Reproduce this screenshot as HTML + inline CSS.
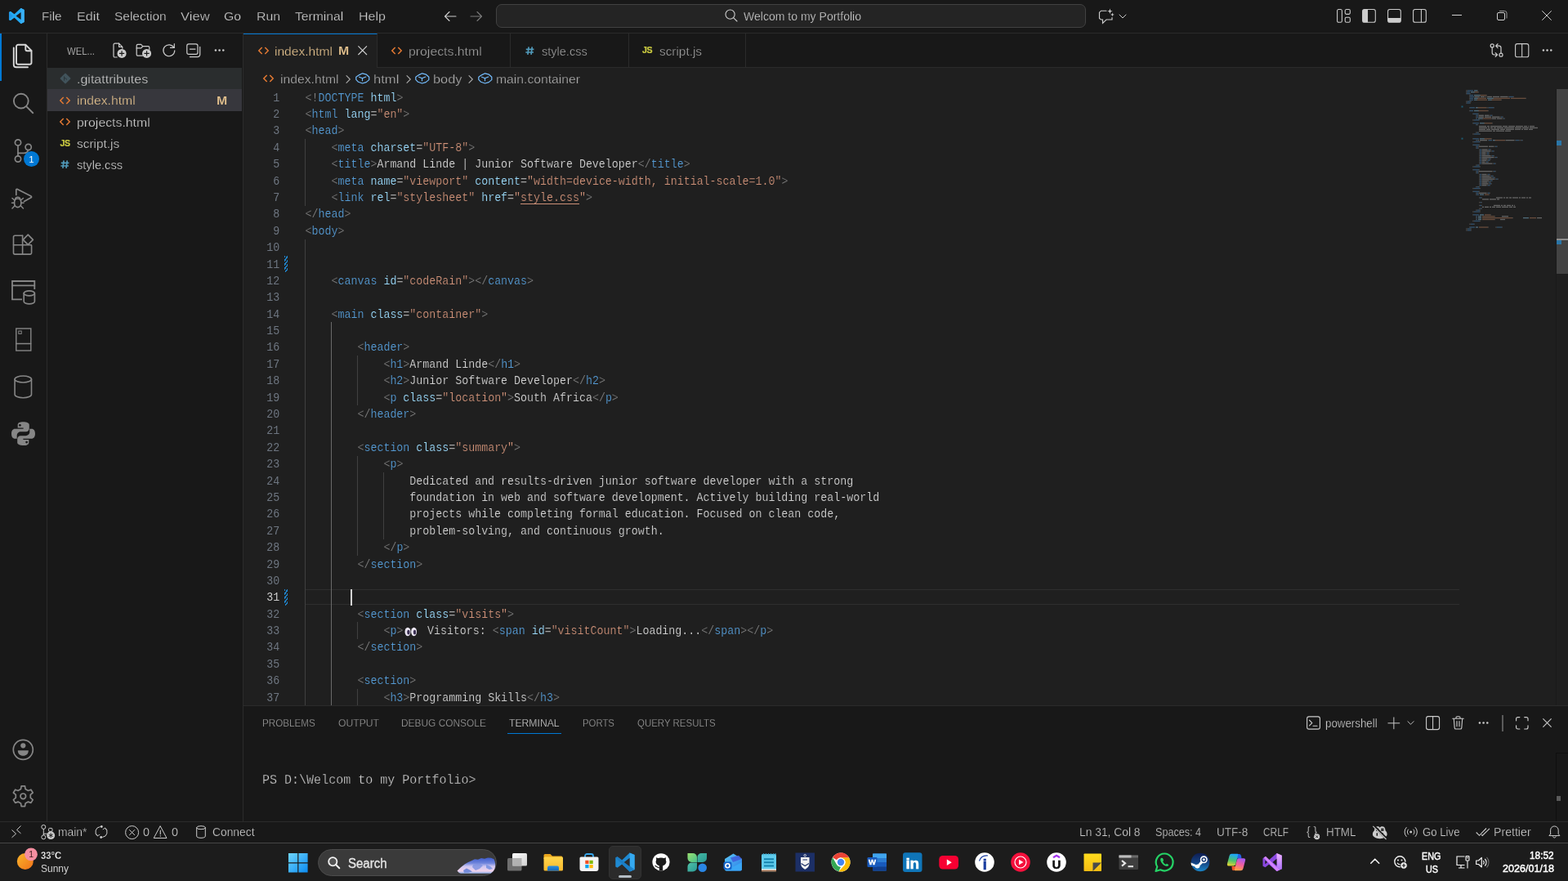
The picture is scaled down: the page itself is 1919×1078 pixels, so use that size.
<!DOCTYPE html>
<html lang="en">
<head>
<meta charset="UTF-8">
<title>index.html - Welcom to my Portfolio - Visual Studio Code</title>
<style>
*{box-sizing:border-box;margin:0;padding:0}
html,body{width:1919px;height:1078px;overflow:hidden;background:#181818}
body{font-family:"Liberation Sans","DejaVu Sans",sans-serif;color:#ccc;-webkit-font-smoothing:antialiased}
#app{position:absolute;left:0;top:0;width:1919px;height:1078px;overflow:hidden;background:#181818;will-change:transform}
.b{position:absolute;display:block}
.t{position:absolute;display:block;white-space:pre;line-height:20px;height:20px;transform-origin:0 50%;-webkit-text-stroke:0.25px #181818}
.m{font-family:"Liberation Mono","DejaVu Sans Mono",monospace}
svg{position:absolute;display:block;overflow:visible}
.x text{font-family:"Liberation Sans","DejaVu Sans",sans-serif;white-space:pre;stroke:#181818;stroke-width:.25px}
.x.m text{font-family:"Liberation Mono","DejaVu Sans Mono",monospace}
.ln{position:absolute;left:0;width:45.3px;text-align:right;color:#6e7681}
.cl{position:absolute;left:76.6px;white-space:pre;color:#d2d2d2}
.cl{-webkit-text-stroke:0.16px #1f1f1f}
.ln,.cl{transform:scaleY(1.12);transform-origin:0 13.75px}
.ln,.cl{font-family:"Liberation Mono","DejaVu Sans Mono",monospace;font-size:13.333px;letter-spacing:-0.015px;height:20.4px;line-height:20.4px}
.d{color:#808080}.g{color:#569cd6}.a{color:#9cdcfe}.s{color:#ce9178}
.emo{display:inline-block;width:21.6px;letter-spacing:0;font-size:12.5px;overflow:hidden;vertical-align:top;height:20.4px;opacity:0}
.ig{position:absolute;width:1px;background:#404040}
</style>
</head>
<body>
<div id="app">
<div class="b" style="left:0px;top:0px;width:1919px;height:40px;background:#181818;"></div>
<div class="b" style="left:0px;top:40px;width:1919px;height:1px;background:#2b2b2b;"></div>
<svg style="left:10px;top:10px;" width="20.5" height="19.07" viewBox="8 7 84 86" fill="none"><path d="M74 7L38 41 17 25 8 29v42l9 4 21-16 36 34 18-9V16z" fill="#2196e6"/><path d="M74 7L38 41 17 25 8 29 30 50 8 71l9 4 21-16 36 34 18-9V16zM74 30v40L47 50z" fill="#23a9f2" fill-rule="evenodd"/><path d="M74 7l18 9v68l-18 9z" fill="#3ab0f5"/><path d="M74 30v40L47 50z" fill="#181818"/></svg>
<svg class="x" style="left:51.2px;top:10px" width="28" height="20"><text y="15.27" font-size="15.2" fill="#cccccc" textLength="24.6" lengthAdjust="spacingAndGlyphs">File</text></svg>
<svg class="x" style="left:94.2px;top:10px" width="31" height="20"><text y="15.27" font-size="15.2" fill="#cccccc" textLength="27.9" lengthAdjust="spacingAndGlyphs">Edit</text></svg>
<svg class="x" style="left:139.7px;top:10px" width="67" height="20"><text y="15.27" font-size="15.2" fill="#cccccc" textLength="63.6" lengthAdjust="spacingAndGlyphs">Selection</text></svg>
<svg class="x" style="left:221.2px;top:10px" width="39" height="20"><text y="15.27" font-size="15.2" fill="#cccccc" textLength="35.6" lengthAdjust="spacingAndGlyphs">View</text></svg>
<svg class="x" style="left:274.2px;top:10px" width="24" height="20"><text y="15.27" font-size="15.2" fill="#cccccc" textLength="21.1" lengthAdjust="spacingAndGlyphs">Go</text></svg>
<svg class="x" style="left:314.2px;top:10px" width="32" height="20"><text y="15.27" font-size="15.2" fill="#cccccc" textLength="29.1" lengthAdjust="spacingAndGlyphs">Run</text></svg>
<svg class="x" style="left:361px;top:10px" width="62" height="20"><text y="15.27" font-size="15.2" fill="#cccccc" textLength="59.3" lengthAdjust="spacingAndGlyphs">Terminal</text></svg>
<svg class="x" style="left:439.2px;top:10px" width="36" height="20"><text y="15.27" font-size="15.2" fill="#cccccc" textLength="32.9" lengthAdjust="spacingAndGlyphs">Help</text></svg>
<svg style="left:542.5px;top:12px;" width="16" height="16" viewBox="0 0 16 16" fill="none"><path d="M15 8H1.5M7 2.5L1.5 8L7 13.5" stroke="#cccccc" stroke-width="1.1" fill="none" stroke-linecap="round" stroke-linejoin="round"/></svg>
<svg style="left:574.5px;top:12px;" width="16" height="16" viewBox="0 0 16 16" fill="none"><path d="M1 8H14.5M9 2.5L14.5 8L9 13.5" stroke="#7a7a7a" stroke-width="1.1" fill="none" stroke-linecap="round" stroke-linejoin="round"/></svg>
<div class="b" style="left:607px;top:5px;width:722px;height:29px;background:#242424;border:1px solid #414141;border-radius:7px;"></div>
<svg style="left:887px;top:11px;" width="16" height="16" viewBox="0 0 16 16" fill="none"><circle cx="6.6" cy="6.6" r="5.6" stroke="#cccccc" stroke-width="1.1"/><path d="M10.8 10.8L15 15" stroke="#cccccc" stroke-width="1.1" fill="none" stroke-linecap="round" stroke-linejoin="round"/></svg>
<svg class="x" style="left:909.5px;top:9.8px" width="147" height="20"><text y="15.06" font-size="14.6" fill="#cccccc" textLength="144" lengthAdjust="spacingAndGlyphs" style="stroke:#242424;stroke-width:0.25px">Welcom to my Portfolio</text></svg>
<svg style="left:1344px;top:9.5px;" width="20" height="20" viewBox="0 0 20 20" fill="none"><path d="M10 3.2H3.6L1.5 5.2V12.4L3.4 14H5.5V18.3L10 14H17V11.6" stroke="#cccccc" stroke-width="1.15" fill="none" stroke-linecap="round" stroke-linejoin="miter"/><path d="M14.4 0.5L15.2 2.9L17.6 3.7L15.2 4.5L14.4 6.9L13.6 4.5L11.2 3.7L13.6 2.9z" fill="#cccccc"/><path d="M17.4 5.5L18 7.3L19.8 7.9L18 8.5L17.4 10.3L16.8 8.5L15 7.9L16.8 7.3z" fill="#cccccc"/></svg>
<svg style="left:1369px;top:14.5px;" width="10" height="10" viewBox="0 0 10 10" fill="none"><path d="M1 3L5 7L9 3" stroke="#cccccc" stroke-width="1" fill="none" stroke-linecap="round" stroke-linejoin="round"/></svg>
<svg style="left:1635.5px;top:11.2px;" width="16.9" height="16.9" viewBox="0 0 17.5 17.5" fill="none"><rect x="0.6" y="0.6" width="6" height="16.3" rx="1.6" stroke="#cccccc" stroke-width="1.1"/><rect x="10.6" y="0.6" width="6.3" height="6" rx="1.6" stroke="#cccccc" stroke-width="1.1"/><rect x="10.6" y="10.6" width="6.3" height="6.3" rx="1.6" stroke="#cccccc" stroke-width="1.1"/></svg>
<svg style="left:1666.5px;top:11.2px;" width="16.9" height="16.9" viewBox="0 0 17.5 17.5" fill="none"><rect x="0.6" y="0.6" width="16.3" height="16.3" rx="2.4" stroke="#cccccc" stroke-width="1.1"/><path d="M3 0.6H7.3V16.9H3A2.4 2.4 0 0 1 0.6 14.5V3A2.4 2.4 0 0 1 3 0.6z" fill="#cccccc"/></svg>
<svg style="left:1698px;top:11.2px;" width="16.9" height="16.9" viewBox="0 0 17.5 17.5" fill="none"><rect x="0.6" y="0.6" width="16.3" height="16.3" rx="2.4" stroke="#cccccc" stroke-width="1.1"/><path d="M0.6 11.5H16.9V14.5A2.4 2.4 0 0 1 14.5 16.9H3A2.4 2.4 0 0 1 0.6 14.5z" fill="#cccccc"/></svg>
<svg style="left:1728.5px;top:11.2px;" width="16.9" height="16.9" viewBox="0 0 17.5 17.5" fill="none"><rect x="0.6" y="0.6" width="16.3" height="16.3" rx="2.4" stroke="#cccccc" stroke-width="1.1"/><path d="M10.8 0.6V16.9" stroke="#cccccc" stroke-width="1.1"/></svg>
<svg style="left:1777px;top:12px;" width="12" height="12" viewBox="0 0 12 12" fill="none"><path d="M0 6.5H12" stroke="#cfcfcf" stroke-width="1"/></svg>
<svg style="left:1832px;top:13px;" width="12.5" height="12.5" viewBox="0 0 12.5 12.5" fill="none"><rect x="0.5" y="2.5" width="9" height="9" rx="1.5" stroke="#cfcfcf"/><path d="M3 0.5H9.5A2.5 2.5 0 0 1 12 3V9.5" stroke="#9a9a9a"/></svg>
<svg style="left:1887px;top:13px;" width="12" height="12" viewBox="0 0 12 12" fill="none"><path d="M0.3 0.3L11.7 11.7M11.7 0.3L0.3 11.7" stroke="#cfcfcf" stroke-width="1"/></svg>
<div class="b" style="left:0px;top:41px;width:57px;height:964px;background:#181818;"></div>
<div class="b" style="left:0px;top:41px;width:2px;height:58px;background:#0078d4;"></div>
<svg style="left:14px;top:54px;" width="30" height="30" viewBox="0 0 30 30" fill="none"><path d="M17.5 0.8H8.2A2.2 2.2 0 0 0 6 3V22.5A2.2 2.2 0 0 0 8.2 24.7H22.3A2.2 2.2 0 0 0 24.5 22.5V8L17.5 0.8z" stroke="#d7d7d7" stroke-width="1.9" fill="none" stroke-linecap="round" stroke-linejoin="round"/><path d="M17.3 1V6.2A2 2 0 0 0 19.3 8.2H24.3" stroke="#d7d7d7" stroke-width="1.9" fill="none" stroke-linecap="round" stroke-linejoin="round"/><path d="M2.8 4.5V25.2A3 3 0 0 0 5.8 28.2H20" stroke="#d7d7d7" stroke-width="1.9" fill="none" stroke-linecap="round" stroke-linejoin="round"/></svg>
<svg style="left:14px;top:112px;" width="30" height="30" viewBox="0 0 30 30" fill="none"><circle cx="11.8" cy="11.6" r="8.9" stroke="#868686" stroke-width="1.9"/><path d="M18.4 18.4L26.3 26.2" stroke="#868686" stroke-width="1.9" fill="none" stroke-linecap="round" stroke-linejoin="round"/></svg>
<svg style="left:14px;top:170px;" width="30" height="30" viewBox="0 0 30 30" fill="none"><circle cx="8" cy="4.4" r="3.6" stroke="#868686" stroke-width="1.7"/><circle cx="8" cy="24.5" r="3.6" stroke="#868686" stroke-width="1.7"/><circle cx="20.7" cy="10" r="3.6" stroke="#868686" stroke-width="1.7"/><path d="M8 8V21" stroke="#868686" stroke-width="1.7" fill="none" stroke-linecap="round" stroke-linejoin="round"/><path d="M20.3 13.6C20 16.5 18 17.3 15 17.3H8" stroke="#868686" stroke-width="1.7" fill="none" stroke-linecap="round" stroke-linejoin="round"/></svg>
<div class="b" style="left:29px;top:185px;width:19px;height:19px;background:#0078d4;border-radius:50%;"></div>
<span class="t" style="left:35.3px;top:187.6px;font-size:11.5px;color:#ffffff;line-height:14px;height:14px;-webkit-text-stroke:0px #181818;">1</span>
<svg style="left:14px;top:228px;" width="30" height="30" viewBox="0 0 30 30" fill="none"><path d="M5.8 10.5V4.2A1 1 0 0 1 7.2 3.4L24 12A1 1 0 0 1 24 13.8L15.5 18.5" stroke="#868686" stroke-width="1.7" fill="none" stroke-linecap="round" stroke-linejoin="round"/><ellipse cx="7.7" cy="20.3" rx="4.2" ry="5.3" stroke="#868686" stroke-width="1.7"/><path d="M4.6 15.6A3.2 3.2 0 0 1 10.8 15.6" stroke="#868686" stroke-width="1.6" fill="none" stroke-linecap="round" stroke-linejoin="round"/><path d="M3.5 20.3H0.5M15 20.3H12M3.8 17L1 14.5M11.6 17L14.4 14.5M3.8 24L1 27M11.6 24L14.4 27" stroke="#868686" stroke-width="1.5" fill="none" stroke-linecap="round" stroke-linejoin="round"/></svg>
<svg style="left:14px;top:286px;" width="30" height="30" viewBox="0 0 30 30" fill="none"><path d="M13.6 2.3H4.3A1.8 1.8 0 0 0 2.5 4.1V23.3A1.8 1.8 0 0 0 4.3 25.1H22.8A1.8 1.8 0 0 0 24.6 23.3V14.2" stroke="#868686" stroke-width="1.6" fill="none" stroke-linecap="round" stroke-linejoin="round"/><path d="M2.5 13.7H24.3M13.6 2.3V25.1" stroke="#868686" stroke-width="1.6" fill="none" stroke-linecap="round" stroke-linejoin="round"/><path d="M20.3 1.2L26.4 7.3L20.3 13.4L14.2 7.3z" stroke="#868686" stroke-width="1.7" fill="none" stroke-linecap="round" stroke-linejoin="round"/></svg>
<svg style="left:14px;top:343px;" width="30" height="30" viewBox="0 0 30 30" fill="none"><path d="M13 23.3H1V1H28.3V11" stroke="#868686" stroke-width="1.8" fill="none" stroke-linecap="butt" stroke-linejoin="miter"/><path d="M1 6.3H28.3" stroke="#868686" stroke-width="1.8" fill="none" stroke-linecap="round" stroke-linejoin="round"/><ellipse cx="21.8" cy="15.8" rx="6.6" ry="3" stroke="#868686" stroke-width="1.7"/><path d="M15.2 15.8V25.8C15.2 27.5 18.2 28.8 21.8 28.8S28.4 27.5 28.4 25.8V15.8" stroke="#868686" stroke-width="1.7" fill="none" stroke-linecap="round" stroke-linejoin="round"/></svg>
<svg style="left:14px;top:401px;" width="30" height="30" viewBox="0 0 30 30" fill="none"><rect x="5.8" y="1" width="18" height="27" stroke="#868686" stroke-width="1.4"/><path d="M5.8 19.5H23.8" stroke="#868686" stroke-width="1.4" fill="none" stroke-linecap="round" stroke-linejoin="round"/><rect x="8.8" y="4" width="3.4" height="3.4" stroke="#868686" stroke-width="1"/></svg>
<svg style="left:14px;top:459px;" width="30" height="30" viewBox="0 0 30 30" fill="none"><ellipse cx="14.3" cy="5" rx="10.2" ry="4" stroke="#868686" stroke-width="1.6"/><path d="M4.1 5V23.5C4.1 26 8.7 27.8 14.3 27.8S24.5 26 24.5 23.5V5" stroke="#868686" stroke-width="1.6" fill="none" stroke-linecap="round" stroke-linejoin="round"/></svg>
<svg style="left:14px;top:516px;" width="30" height="30" viewBox="0 0 30 30" fill="none"><path d="M14.2 0.3c-3.7 0-6.5 1-6.5 3.6v3.6h6.9v1.2H4.4C1.7 8.7 0 10.9 0 14.7s1.6 6 4.3 6h2.4v-3.9c0-2.7 2.3-4.6 4.9-4.6h6.3c2.2 0 3.9-1.8 3.9-4V3.9c0-2.2-2.9-3.6-7.6-3.6z" fill="#868686"/><path d="M14.8 29.1c3.7 0 6.5-1 6.5-3.6v-3.6h-6.9v-1.2h10.2c2.7 0 4.4-2.2 4.4-6s-1.6-6-4.3-6h-2.4v3.9c0 2.7-2.3 4.6-4.9 4.6h-6.3c-2.2 0-3.9 1.8-3.9 4v4.3c0 2.2 2.9 3.6 7.6 3.6z" fill="#868686"/><circle cx="10.4" cy="4.3" r="1.4" fill="#181818"/><circle cx="18.6" cy="25.1" r="1.4" fill="#181818"/></svg>
<svg style="left:14px;top:903px;" width="30" height="30" viewBox="0 0 30 30" fill="none"><circle cx="14.3" cy="14.3" r="12" stroke="#868686" stroke-width="1.7"/><circle cx="14.3" cy="9.3" r="3.1" fill="#868686"/><path d="M7.8 15.3H20.8C20.8 19.5 18.3 21.8 14.3 21.8S7.8 19.5 7.8 15.3z" fill="#868686"/></svg>
<svg style="left:14px;top:960px;" width="30" height="30" viewBox="0 0 30 30" fill="none"><path d="M12.1 1.9L16.5 1.9L17.1 5.6L20.5 7.5L23.9 6.2L26.2 10.0L23.3 12.4L23.3 16.2L26.2 18.6L23.9 22.4L20.5 21.1L17.1 23.0L16.5 26.7L12.1 26.7L11.5 23.0L8.1 21.1L4.7 22.4L2.4 18.6L5.3 16.2L5.3 12.4L2.4 10.0L4.7 6.2L8.1 7.5L11.5 5.6z" stroke="#868686" stroke-width="1.7" fill="none" stroke-linecap="round" stroke-linejoin="round"/><circle cx="14.3" cy="14.3" r="3.3" stroke="#868686" stroke-width="1.7"/></svg>
<div class="b" style="left:58px;top:41px;width:239px;height:964px;background:#181818;"></div>
<svg class="x" style="left:81.8px;top:51.8px" width="37" height="20"><text y="14.5" font-size="13" fill="#cccccc" textLength="34" lengthAdjust="spacingAndGlyphs">WEL...</text></svg>
<svg style="left:136.3px;top:51.7px;" width="19.2" height="19.2" viewBox="0 0 16 16" fill="none"><path d="M8 1H3.7A1.2 1.2 0 0 0 2.5 2.2V13.8A1.2 1.2 0 0 0 3.7 15H6" stroke="#cccccc" stroke-width="1" fill="none" stroke-linecap="round" stroke-linejoin="round"/><path d="M8 1L11.5 4.5V6M8 1V4.5H11.5" stroke="#cccccc" stroke-width="1" fill="none" stroke-linecap="round" stroke-linejoin="round"/><circle cx="10.9" cy="11.2" r="4.6" fill="#cccccc"/><path d="M10.9 8.6V13.8M8.3 11.2H13.5" stroke="#181818" stroke-width="1"/></svg>
<svg style="left:165.8px;top:51.9px;" width="19.2" height="19.2" viewBox="0 0 16 16" fill="none"><path d="M7 13.5H2.2A1.2 1.2 0 0 1 1 12.3V3.2A1.2 1.2 0 0 1 2.2 2H5.5L7.3 3.8H12.8A1.2 1.2 0 0 1 14 5V7" stroke="#cccccc" stroke-width="1" fill="none" stroke-linecap="round" stroke-linejoin="round"/><path d="M1 5.8H5.6L7.3 3.9" stroke="#cccccc" stroke-width="1" fill="none" stroke-linecap="round" stroke-linejoin="round"/><circle cx="11.3" cy="11.2" r="4.6" fill="#cccccc"/><path d="M11.3 8.6V13.8M8.7 11.2H13.9" stroke="#181818" stroke-width="1"/></svg>
<svg style="left:196.5px;top:51.3px;" width="19.2" height="19.2" viewBox="0 0 16 16" fill="none"><path d="M13.3 6.2A5.8 5.8 0 1 0 14 9" stroke="#cccccc" stroke-width="1" fill="none" stroke-linecap="round" stroke-linejoin="round"/><path d="M13.6 2.2V6.2H9.6" stroke="#cccccc" stroke-width="1" fill="none" stroke-linecap="round" stroke-linejoin="round"/></svg>
<svg style="left:227.2px;top:51.6px;" width="19.2" height="19.2" viewBox="0 0 16 16" fill="none"><rect x="1.5" y="1.5" width="11" height="10.5" rx="1.8" stroke="#cccccc" stroke-width="1"/><path d="M4.5 6.7H10" stroke="#cccccc" stroke-width="1" fill="none" stroke-linecap="round" stroke-linejoin="round"/><path d="M14.8 4.5V12.3A2.4 2.4 0 0 1 12.4 14.7H4.5" stroke="#cccccc" stroke-width="1" fill="none" stroke-linecap="round" stroke-linejoin="round"/></svg>
<svg style="left:259.4px;top:51.9px;" width="19.2" height="19.2" viewBox="0 0 16 16" fill="none"><circle cx="4.1" cy="8" r="1.05" fill="#cccccc"/><circle cx="8" cy="8" r="1.05" fill="#cccccc"/><circle cx="11.9" cy="8" r="1.05" fill="#cccccc"/></svg>
<div class="b" style="left:58px;top:83px;width:238px;height:26.4px;background:#2a2d2e;"></div>
<svg style="left:72.5px;top:89.4px;" width="14" height="14" viewBox="0 0 14 14" fill="none"><rect x="2.2" y="2.2" width="9.6" height="9.6" rx="1" transform="rotate(45 7 7)" fill="#41535b"/><path d="M5.6 4.8V9.2M5.6 6.5C7.5 6.5 8.4 7 8.4 8.2" stroke="#2a3439" stroke-width="1" fill="none" stroke-linecap="round" stroke-linejoin="round"/></svg>
<svg class="x" style="left:93.6px;top:86.7px" width="90" height="20"><text y="15.27" font-size="15.2" fill="#cccccc" textLength="87.2" lengthAdjust="spacingAndGlyphs" style="stroke:#2a2d2e;stroke-width:0.25px">.gitattributes</text></svg>
<div class="b" style="left:58px;top:109.4px;width:238px;height:26.4px;background:#37373d;"></div>
<svg style="left:73px;top:117.8px;" width="13" height="10" viewBox="0 0 13 10" fill="none"><path d="M4.7 1L0.8 5L4.7 9M8.3 1L12.2 5L8.3 9" stroke="#e37933" stroke-width="1.5" fill="none" stroke-linecap="butt" stroke-linejoin="miter"/></svg>
<svg class="x" style="left:93.6px;top:113.1px" width="75" height="20"><text y="15.27" font-size="15.2" fill="#e2c08d" textLength="71.7" lengthAdjust="spacingAndGlyphs" style="stroke:#37373d;stroke-width:0.25px">index.html</text></svg>
<svg class="x" style="left:264.6px;top:112.6px" width="16" height="20"><text y="15.06" font-size="14.6" fill="#e2c08d" textLength="13.2" lengthAdjust="spacingAndGlyphs" font-weight="700" style="stroke:#37373d;stroke-width:0.1px">M</text></svg>
<svg style="left:73px;top:144.2px;" width="13" height="10" viewBox="0 0 13 10" fill="none"><path d="M4.7 1L0.8 5L4.7 9M8.3 1L12.2 5L8.3 9" stroke="#e37933" stroke-width="1.5" fill="none" stroke-linecap="butt" stroke-linejoin="miter"/></svg>
<svg class="x" style="left:93.6px;top:139.5px" width="93" height="20"><text y="15.27" font-size="15.2" fill="#cccccc" textLength="89.7" lengthAdjust="spacingAndGlyphs">projects.html</text></svg>
<span class="t" style="left:73.6px;top:167.5px;font-size:10.6px;font-weight:700;color:#cbcb41;letter-spacing:-0.5px;line-height:14px;height:14px;-webkit-text-stroke:0.2px #cbcb41">JS</span>
<svg class="x" style="left:93.6px;top:165.9px" width="55" height="20"><text y="15.27" font-size="15.2" fill="#cccccc" textLength="52.2" lengthAdjust="spacingAndGlyphs">script.js</text></svg>
<svg style="left:73.9px;top:196.2px;" width="11.4" height="10.4" viewBox="0 0 12 11" fill="none"><path d="M4.3 0.5L3 10.5M8.7 0.5L7.4 10.5M0.8 3.6H11M0.3 7.4H10.5" stroke="#519aba" stroke-width="1.75" fill="none" stroke-linejoin="round" stroke-linecap="butt"/></svg>
<svg class="x" style="left:93.6px;top:192.3px" width="59" height="20"><text y="15.27" font-size="15.2" fill="#cccccc" textLength="56" lengthAdjust="spacingAndGlyphs">style.css</text></svg>
<div class="b" style="left:297px;top:41px;width:1622px;height:42px;background:#181818;"></div>
<div class="b" style="left:297px;top:82px;width:1622px;height:1px;background:#2b2b2b;"></div>
<div class="b" style="left:298px;top:41px;width:163.7px;height:42px;background:#1f1f1f;border-top:1px solid #0078d4;border-right:1px solid #2b2b2b;"></div>
<svg style="left:315.5px;top:57.3px;" width="13" height="10" viewBox="0 0 13 10" fill="none"><path d="M4.7 1L0.8 5L4.7 9M8.3 1L12.2 5L8.3 9" stroke="#e37933" stroke-width="1.5" fill="none" stroke-linecap="butt" stroke-linejoin="miter"/></svg>
<svg class="x" style="left:335.8px;top:52.6px" width="74" height="20"><text y="15.27" font-size="15.2" fill="#e2c08d" textLength="71" lengthAdjust="spacingAndGlyphs" style="stroke:#1f1f1f;stroke-width:0.25px">index.html</text></svg>
<svg class="x" style="left:414px;top:52.1px" width="16" height="20"><text y="15.06" font-size="14.6" fill="#e2c08d" textLength="13.2" lengthAdjust="spacingAndGlyphs" font-weight="700" style="stroke:#1f1f1f;stroke-width:0.1px">M</text></svg>
<svg style="left:438px;top:56.3px;" width="11.4" height="11.4" viewBox="0 0 11.4 11.4" fill="none"><path d="M0.4 0.4L11 11M11 0.4L0.4 11" stroke="#d0d0d0" stroke-width="1.1"/></svg>
<div class="b" style="left:623.5px;top:41px;width:1px;height:41px;background:#2b2b2b;"></div>
<svg style="left:479.3px;top:57.3px;" width="13" height="10" viewBox="0 0 13 10" fill="none"><path d="M4.7 1L0.8 5L4.7 9M8.3 1L12.2 5L8.3 9" stroke="#e37933" stroke-width="1.5" fill="none" stroke-linecap="butt" stroke-linejoin="miter"/></svg>
<svg class="x" style="left:499.6px;top:52.6px" width="93" height="20"><text y="15.27" font-size="15.2" fill="#9d9d9d" textLength="89.7" lengthAdjust="spacingAndGlyphs">projects.html</text></svg>
<div class="b" style="left:768.5px;top:41px;width:1px;height:41px;background:#2b2b2b;"></div>
<svg style="left:642.9px;top:56.5px;" width="11.4" height="10.4" viewBox="0 0 12 11" fill="none"><path d="M4.3 0.5L3 10.5M8.7 0.5L7.4 10.5M0.8 3.6H11M0.3 7.4H10.5" stroke="#519aba" stroke-width="1.75" fill="none" stroke-linejoin="round" stroke-linecap="butt"/></svg>
<svg class="x" style="left:662.8px;top:52.6px" width="59" height="20"><text y="15.27" font-size="15.2" fill="#9d9d9d" textLength="55.7" lengthAdjust="spacingAndGlyphs">style.css</text></svg>
<div class="b" style="left:911.5px;top:41px;width:1px;height:41px;background:#2b2b2b;"></div>
<span class="t" style="left:786.1px;top:54.2px;font-size:10.6px;font-weight:700;color:#cbcb41;letter-spacing:-0.5px;line-height:14px;height:14px;-webkit-text-stroke:0.2px #cbcb41">JS</span>
<svg class="x" style="left:806.6px;top:52.6px" width="55" height="20"><text y="15.27" font-size="15.2" fill="#9d9d9d" textLength="52" lengthAdjust="spacingAndGlyphs">script.js</text></svg>
<svg style="left:1822px;top:52px;" width="19.2" height="19.2" viewBox="0 0 16 16" fill="none"><circle cx="3.5" cy="3.3" r="1.7" stroke="#cccccc" stroke-width="1"/><circle cx="12.5" cy="12.7" r="1.7" stroke="#cccccc" stroke-width="1"/><path d="M3.5 5V10.5A2 2 0 0 0 5.5 12.5H8.5M6.8 10.5L8.8 12.5L6.8 14.5" stroke="#cccccc" stroke-width="1" fill="none" stroke-linecap="round" stroke-linejoin="round"/><path d="M12.5 11V5.5A2 2 0 0 0 10.5 3.5H7.5M9.2 1.5L7.2 3.5L9.2 5.5" stroke="#cccccc" stroke-width="1" fill="none" stroke-linecap="round" stroke-linejoin="round"/></svg>
<svg style="left:1853.5px;top:52.7px;" width="17.4" height="17.4" viewBox="0 0 17.5 17.5" fill="none"><rect x="0.6" y="0.6" width="16.3" height="16.3" rx="2.4" stroke="#cccccc" stroke-width="1.1"/><path d="M8.75 0.6V16.9" stroke="#cccccc" stroke-width="1.1"/></svg>
<svg style="left:1883.7px;top:51.9px;" width="19.2" height="19.2" viewBox="0 0 16 16" fill="none"><circle cx="4.1" cy="8" r="1.05" fill="#cccccc"/><circle cx="8" cy="8" r="1.05" fill="#cccccc"/><circle cx="11.9" cy="8" r="1.05" fill="#cccccc"/></svg>
<div class="b" style="left:297px;top:83px;width:1622px;height:26px;background:#1f1f1f;"></div>
<svg style="left:322px;top:91.4px;" width="13" height="10" viewBox="0 0 13 10" fill="none"><path d="M4.7 1L0.8 5L4.7 9M8.3 1L12.2 5L8.3 9" stroke="#e37933" stroke-width="1.5" fill="none" stroke-linecap="butt" stroke-linejoin="miter"/></svg>
<svg class="x" style="left:342.6px;top:86.8px" width="75" height="20"><text y="15.27" font-size="15.2" fill="#a9a9a9" textLength="71.6" lengthAdjust="spacingAndGlyphs" style="stroke:#1f1f1f;stroke-width:0.25px">index.html</text></svg>
<svg style="left:420.5px;top:91.5px;" width="10" height="10" viewBox="0 0 10 10" fill="none"><path d="M3 0.7L7.3 5L3 9.3" stroke="#a9a9a9" stroke-width="1.1" fill="none" stroke-linecap="round" stroke-linejoin="round"/></svg>
<svg style="left:434.5px;top:88.9px;" width="17.6" height="13.8" viewBox="0 0 17.6 13.8" fill="none"><path d="M4.8 2.6L8.6 0.8L13.5 2.2L16.8 5.2V8.6L13.2 11.6L8.6 13L3.6 11.3L0.8 8.3V5.2z" stroke="#75beff" stroke-width="1.2" fill="none" stroke-linecap="round" stroke-linejoin="round"/><path d="M4.6 5.2L8.5 6.8L12.8 5M8.5 6.8V9.8" stroke="#75beff" stroke-width="1.2" fill="none" stroke-linecap="round" stroke-linejoin="round"/></svg>
<svg class="x" style="left:456.6px;top:86.8px" width="34" height="20"><text y="15.27" font-size="15.2" fill="#a9a9a9" textLength="31.4" lengthAdjust="spacingAndGlyphs" style="stroke:#1f1f1f;stroke-width:0.25px">html</text></svg>
<svg style="left:494.5px;top:91.5px;" width="10" height="10" viewBox="0 0 10 10" fill="none"><path d="M3 0.7L7.3 5L3 9.3" stroke="#a9a9a9" stroke-width="1.1" fill="none" stroke-linecap="round" stroke-linejoin="round"/></svg>
<svg style="left:508.3px;top:88.9px;" width="17.6" height="13.8" viewBox="0 0 17.6 13.8" fill="none"><path d="M4.8 2.6L8.6 0.8L13.5 2.2L16.8 5.2V8.6L13.2 11.6L8.6 13L3.6 11.3L0.8 8.3V5.2z" stroke="#75beff" stroke-width="1.2" fill="none" stroke-linecap="round" stroke-linejoin="round"/><path d="M4.6 5.2L8.5 6.8L12.8 5M8.5 6.8V9.8" stroke="#75beff" stroke-width="1.2" fill="none" stroke-linecap="round" stroke-linejoin="round"/></svg>
<svg class="x" style="left:529.5px;top:86.8px" width="38" height="20"><text y="15.27" font-size="15.2" fill="#a9a9a9" textLength="35.5" lengthAdjust="spacingAndGlyphs" style="stroke:#1f1f1f;stroke-width:0.25px">body</text></svg>
<svg style="left:571px;top:91.5px;" width="10" height="10" viewBox="0 0 10 10" fill="none"><path d="M3 0.7L7.3 5L3 9.3" stroke="#a9a9a9" stroke-width="1.1" fill="none" stroke-linecap="round" stroke-linejoin="round"/></svg>
<svg style="left:584.5px;top:88.9px;" width="17.6" height="13.8" viewBox="0 0 17.6 13.8" fill="none"><path d="M4.8 2.6L8.6 0.8L13.5 2.2L16.8 5.2V8.6L13.2 11.6L8.6 13L3.6 11.3L0.8 8.3V5.2z" stroke="#75beff" stroke-width="1.2" fill="none" stroke-linecap="round" stroke-linejoin="round"/><path d="M4.6 5.2L8.5 6.8L12.8 5M8.5 6.8V9.8" stroke="#75beff" stroke-width="1.2" fill="none" stroke-linecap="round" stroke-linejoin="round"/></svg>
<svg class="x" style="left:606.5px;top:86.8px" width="106" height="20"><text y="15.27" font-size="15.2" fill="#a9a9a9" textLength="103" lengthAdjust="spacingAndGlyphs" style="stroke:#1f1f1f;stroke-width:0.25px">main.container</text></svg>
<div class="b" style="left:297px;top:109px;width:1622px;height:754px;background:#1f1f1f;overflow:hidden">
<div class="b" style="left:77px;top:611.5px;width:1412px;height:19.79px;border-top:1px solid #2e2e2e;border-bottom:1px solid #2e2e2e"></div>
<div class="ig" style="left:76.3px;top:61.17px;height:81.56px;"></div>
<div class="ig" style="left:76.3px;top:183.51px;height:591.31px;"></div>
<div class="ig" style="left:108.24px;top:285.46px;height:489.36px;background:#6a6a6a;"></div>
<div class="ig" style="left:140.19px;top:326.24px;height:61.17px;"></div>
<div class="ig" style="left:140.19px;top:448.58px;height:122.34px;"></div>
<div class="ig" style="left:172.13px;top:468.97px;height:81.56px;"></div>
<div class="ig" style="left:140.19px;top:652.48px;height:20.39px;"></div>
<div class="ig" style="left:140.19px;top:734.04px;height:40.78px;"></div>
<div class="ln" style="top:1.6px">1</div>
<div class="cl" style="top:1.6px"><span class="d">&lt;!</span><span class="g">DOCTYPE</span> <span class="a">html</span><span class="d">&gt;</span></div>
<div class="ln" style="top:21.99px">2</div>
<div class="cl" style="top:21.99px"><span class="d">&lt;</span><span class="g">html</span> <span class="a">lang</span>=<span class="s">"en"</span><span class="d">&gt;</span></div>
<div class="ln" style="top:42.38px">3</div>
<div class="cl" style="top:42.38px"><span class="d">&lt;</span><span class="g">head</span><span class="d">&gt;</span></div>
<div class="ln" style="top:62.77px">4</div>
<div class="cl" style="top:62.77px">    <span class="d">&lt;</span><span class="g">meta</span> <span class="a">charset</span>=<span class="s">"UTF-8"</span><span class="d">&gt;</span></div>
<div class="ln" style="top:83.16px">5</div>
<div class="cl" style="top:83.16px">    <span class="d">&lt;</span><span class="g">title</span><span class="d">&gt;</span>Armand Linde | Junior Software Developer<span class="d">&lt;/</span><span class="g">title</span><span class="d">&gt;</span></div>
<div class="ln" style="top:103.55px">6</div>
<div class="cl" style="top:103.55px">    <span class="d">&lt;</span><span class="g">meta</span> <span class="a">name</span>=<span class="s">"viewport"</span> <span class="a">content</span>=<span class="s">"width=device-width, initial-scale=1.0"</span><span class="d">&gt;</span></div>
<div class="ln" style="top:123.94px">7</div>
<div class="cl" style="top:123.94px">    <span class="d">&lt;</span><span class="g">link</span> <span class="a">rel</span>=<span class="s">"stylesheet"</span> <span class="a">href</span>=<span class="s">"</span><span class="s">style.css</span><span class="s">"</span><span class="d">&gt;</span></div>
<div class="ln" style="top:144.33px">8</div>
<div class="cl" style="top:144.33px"><span class="d">&lt;/</span><span class="g">head</span><span class="d">&gt;</span></div>
<div class="ln" style="top:164.72px">9</div>
<div class="cl" style="top:164.72px"><span class="d">&lt;</span><span class="g">body</span><span class="d">&gt;</span></div>
<div class="ln" style="top:185.11px">10</div>
<div class="ln" style="top:205.5px">11</div>
<div class="ln" style="top:225.89px">12</div>
<div class="cl" style="top:225.89px">    <span class="d">&lt;</span><span class="g">canvas</span> <span class="a">id</span>=<span class="s">"codeRain"</span><span class="d">&gt;</span><span class="d">&lt;/</span><span class="g">canvas</span><span class="d">&gt;</span></div>
<div class="ln" style="top:246.28px">13</div>
<div class="ln" style="top:266.67px">14</div>
<div class="cl" style="top:266.67px">    <span class="d">&lt;</span><span class="g">main</span> <span class="a">class</span>=<span class="s">"container"</span><span class="d">&gt;</span></div>
<div class="ln" style="top:287.06px">15</div>
<div class="ln" style="top:307.45px">16</div>
<div class="cl" style="top:307.45px">        <span class="d">&lt;</span><span class="g">header</span><span class="d">&gt;</span></div>
<div class="ln" style="top:327.84px">17</div>
<div class="cl" style="top:327.84px">            <span class="d">&lt;</span><span class="g">h1</span><span class="d">&gt;</span>Armand Linde<span class="d">&lt;/</span><span class="g">h1</span><span class="d">&gt;</span></div>
<div class="ln" style="top:348.23px">18</div>
<div class="cl" style="top:348.23px">            <span class="d">&lt;</span><span class="g">h2</span><span class="d">&gt;</span>Junior Software Developer<span class="d">&lt;/</span><span class="g">h2</span><span class="d">&gt;</span></div>
<div class="ln" style="top:368.62px">19</div>
<div class="cl" style="top:368.62px">            <span class="d">&lt;</span><span class="g">p</span> <span class="a">class</span>=<span class="s">"location"</span><span class="d">&gt;</span>South Africa<span class="d">&lt;/</span><span class="g">p</span><span class="d">&gt;</span></div>
<div class="ln" style="top:389.01px">20</div>
<div class="cl" style="top:389.01px">        <span class="d">&lt;/</span><span class="g">header</span><span class="d">&gt;</span></div>
<div class="ln" style="top:409.4px">21</div>
<div class="ln" style="top:429.79px">22</div>
<div class="cl" style="top:429.79px">        <span class="d">&lt;</span><span class="g">section</span> <span class="a">class</span>=<span class="s">"summary"</span><span class="d">&gt;</span></div>
<div class="ln" style="top:450.18px">23</div>
<div class="cl" style="top:450.18px">            <span class="d">&lt;</span><span class="g">p</span><span class="d">&gt;</span></div>
<div class="ln" style="top:470.57px">24</div>
<div class="cl" style="top:470.57px">                Dedicated and results-driven junior software developer with a strong</div>
<div class="ln" style="top:490.96px">25</div>
<div class="cl" style="top:490.96px">                foundation in web and software development. Actively building real-world</div>
<div class="ln" style="top:511.35px">26</div>
<div class="cl" style="top:511.35px">                projects while completing formal education. Focused on clean code,</div>
<div class="ln" style="top:531.74px">27</div>
<div class="cl" style="top:531.74px">                problem-solving, and continuous growth.</div>
<div class="ln" style="top:552.13px">28</div>
<div class="cl" style="top:552.13px">            <span class="d">&lt;/</span><span class="g">p</span><span class="d">&gt;</span></div>
<div class="ln" style="top:572.52px">29</div>
<div class="cl" style="top:572.52px">        <span class="d">&lt;/</span><span class="g">section</span><span class="d">&gt;</span></div>
<div class="ln" style="top:592.91px">30</div>
<div class="ln" style="top:613.3px;color:#ccc">31</div>
<div class="ln" style="top:633.69px">32</div>
<div class="cl" style="top:633.69px">        <span class="d">&lt;</span><span class="g">section</span> <span class="a">class</span>=<span class="s">"visits"</span><span class="d">&gt;</span></div>
<div class="ln" style="top:654.08px">33</div>
<div class="cl" style="top:654.08px">            <span class="d">&lt;</span><span class="g">p</span><span class="d">&gt;</span><span class="emo">👀</span> Visitors: <span class="d">&lt;</span><span class="g">span</span> <span class="a">id</span>=<span class="s">"visitCount"</span><span class="d">&gt;</span>Loading...<span class="d">&lt;/</span><span class="g">span</span><span class="d">&gt;</span><span class="d">&lt;/</span><span class="g">p</span><span class="d">&gt;</span></div>
<div class="ln" style="top:674.47px">34</div>
<div class="cl" style="top:674.47px">        <span class="d">&lt;/</span><span class="g">section</span><span class="d">&gt;</span></div>
<div class="ln" style="top:694.86px">35</div>
<div class="ln" style="top:715.25px">36</div>
<div class="cl" style="top:715.25px">        <span class="d">&lt;</span><span class="g">section</span><span class="d">&gt;</span></div>
<div class="ln" style="top:735.64px">37</div>
<div class="cl" style="top:735.64px">            <span class="d">&lt;</span><span class="g">h3</span><span class="d">&gt;</span>Programming Skills<span class="d">&lt;/</span><span class="g">h3</span><span class="d">&gt;</span></div>
<div class="b" style="left:51.2px;top:203.9px;width:3.8px;height:20.39px;background:repeating-linear-gradient(125deg,#1f82c8 0 1.5px,#1f1f1f 1.5px 2.9px)"></div>
<div class="b" style="left:51.2px;top:611.7px;width:3.8px;height:20.39px;background:repeating-linear-gradient(125deg,#1f82c8 0 1.5px,#1f1f1f 1.5px 2.9px)"></div>
<div class="b" style="left:340.14px;top:139.64px;width:71.87px;height:1px;background:#ce9178"></div>
<svg style="left:198.09px;top:657.68px;" width="16" height="12" viewBox="0 0 16 12" fill="none"><ellipse cx="4" cy="6" rx="3.5" ry="5.3" fill="#ebe6f3"/><ellipse cx="11.6" cy="6" rx="3.5" ry="5.3" fill="#ebe6f3"/><ellipse cx="4.9" cy="6.7" rx="1.7" ry="2.9" fill="#3b3052"/><ellipse cx="12.5" cy="6.7" rx="1.7" ry="2.9" fill="#3b3052"/></svg>
<div class="b" style="left:132px;top:612.2px;width:2px;height:19.39px;background:#d4d4d4"></div>
<svg style="left:1497px;top:0px;opacity:.62;" width="110" height="190" viewBox="0 0 110 190" fill="none"><rect x="0" y="1.2" width="2" height="1.3" fill="#5a5a5a"/><rect x="2" y="1.2" width="7" height="1.3" fill="#3f6f99"/><rect x="10" y="1.2" width="4" height="1.3" fill="#6f9bb3"/><rect x="14" y="1.2" width="1" height="1.3" fill="#5a5a5a"/><rect x="0" y="3.1" width="1" height="1.3" fill="#5a5a5a"/><rect x="1" y="3.1" width="4" height="1.3" fill="#3f6f99"/><rect x="6" y="3.1" width="4" height="1.3" fill="#6f9bb3"/><rect x="10" y="3.1" width="1" height="1.3" fill="#8f8f8f"/><rect x="11" y="3.1" width="4" height="1.3" fill="#94694f"/><rect x="15" y="3.1" width="1" height="1.3" fill="#5a5a5a"/><rect x="0" y="5" width="1" height="1.3" fill="#5a5a5a"/><rect x="1" y="5" width="4" height="1.3" fill="#3f6f99"/><rect x="5" y="5" width="1" height="1.3" fill="#5a5a5a"/><rect x="4" y="6.9" width="1" height="1.3" fill="#5a5a5a"/><rect x="5" y="6.9" width="4" height="1.3" fill="#3f6f99"/><rect x="10" y="6.9" width="7" height="1.3" fill="#6f9bb3"/><rect x="17" y="6.9" width="1" height="1.3" fill="#8f8f8f"/><rect x="18" y="6.9" width="7" height="1.3" fill="#94694f"/><rect x="25" y="6.9" width="1" height="1.3" fill="#5a5a5a"/><rect x="4" y="8.8" width="1" height="1.3" fill="#5a5a5a"/><rect x="5" y="8.8" width="5" height="1.3" fill="#3f6f99"/><rect x="10" y="8.8" width="1" height="1.3" fill="#5a5a5a"/><rect x="11" y="8.8" width="6" height="1.3" fill="#8f8f8f"/><rect x="18" y="8.8" width="5" height="1.3" fill="#8f8f8f"/><rect x="24" y="8.8" width="1" height="1.3" fill="#8f8f8f"/><rect x="26" y="8.8" width="6" height="1.3" fill="#8f8f8f"/><rect x="33" y="8.8" width="8" height="1.3" fill="#8f8f8f"/><rect x="42" y="8.8" width="9" height="1.3" fill="#8f8f8f"/><rect x="51" y="8.8" width="2" height="1.3" fill="#5a5a5a"/><rect x="53" y="8.8" width="5" height="1.3" fill="#3f6f99"/><rect x="58" y="8.8" width="1" height="1.3" fill="#5a5a5a"/><rect x="4" y="10.7" width="1" height="1.3" fill="#5a5a5a"/><rect x="5" y="10.7" width="4" height="1.3" fill="#3f6f99"/><rect x="10" y="10.7" width="4" height="1.3" fill="#6f9bb3"/><rect x="14" y="10.7" width="1" height="1.3" fill="#8f8f8f"/><rect x="15" y="10.7" width="10" height="1.3" fill="#94694f"/><rect x="26" y="10.7" width="7" height="1.3" fill="#6f9bb3"/><rect x="33" y="10.7" width="1" height="1.3" fill="#8f8f8f"/><rect x="34" y="10.7" width="20" height="1.3" fill="#94694f"/><rect x="55" y="10.7" width="18" height="1.3" fill="#94694f"/><rect x="73" y="10.7" width="1" height="1.3" fill="#5a5a5a"/><rect x="4" y="12.6" width="1" height="1.3" fill="#5a5a5a"/><rect x="5" y="12.6" width="4" height="1.3" fill="#3f6f99"/><rect x="10" y="12.6" width="3" height="1.3" fill="#6f9bb3"/><rect x="13" y="12.6" width="1" height="1.3" fill="#8f8f8f"/><rect x="14" y="12.6" width="12" height="1.3" fill="#94694f"/><rect x="27" y="12.6" width="4" height="1.3" fill="#6f9bb3"/><rect x="31" y="12.6" width="1" height="1.3" fill="#8f8f8f"/><rect x="32" y="12.6" width="1" height="1.3" fill="#94694f"/><rect x="33" y="12.6" width="9" height="1.3" fill="#94694f"/><rect x="42" y="12.6" width="1" height="1.3" fill="#94694f"/><rect x="43" y="12.6" width="1" height="1.3" fill="#5a5a5a"/><rect x="0" y="14.5" width="2" height="1.3" fill="#5a5a5a"/><rect x="2" y="14.5" width="4" height="1.3" fill="#3f6f99"/><rect x="6" y="14.5" width="1" height="1.3" fill="#5a5a5a"/><rect x="0" y="16.4" width="1" height="1.3" fill="#5a5a5a"/><rect x="1" y="16.4" width="4" height="1.3" fill="#3f6f99"/><rect x="5" y="16.4" width="1" height="1.3" fill="#5a5a5a"/><rect x="4" y="22.1" width="1" height="1.3" fill="#5a5a5a"/><rect x="5" y="22.1" width="6" height="1.3" fill="#3f6f99"/><rect x="12" y="22.1" width="2" height="1.3" fill="#6f9bb3"/><rect x="14" y="22.1" width="1" height="1.3" fill="#8f8f8f"/><rect x="15" y="22.1" width="10" height="1.3" fill="#94694f"/><rect x="25" y="22.1" width="1" height="1.3" fill="#5a5a5a"/><rect x="26" y="22.1" width="2" height="1.3" fill="#5a5a5a"/><rect x="28" y="22.1" width="6" height="1.3" fill="#3f6f99"/><rect x="34" y="22.1" width="1" height="1.3" fill="#5a5a5a"/><rect x="4" y="25.9" width="1" height="1.3" fill="#5a5a5a"/><rect x="5" y="25.9" width="4" height="1.3" fill="#3f6f99"/><rect x="10" y="25.9" width="5" height="1.3" fill="#6f9bb3"/><rect x="15" y="25.9" width="1" height="1.3" fill="#8f8f8f"/><rect x="16" y="25.9" width="11" height="1.3" fill="#94694f"/><rect x="27" y="25.9" width="1" height="1.3" fill="#5a5a5a"/><rect x="8" y="29.7" width="1" height="1.3" fill="#5a5a5a"/><rect x="9" y="29.7" width="6" height="1.3" fill="#3f6f99"/><rect x="15" y="29.7" width="1" height="1.3" fill="#5a5a5a"/><rect x="12" y="31.6" width="1" height="1.3" fill="#5a5a5a"/><rect x="13" y="31.6" width="2" height="1.3" fill="#3f6f99"/><rect x="15" y="31.6" width="1" height="1.3" fill="#5a5a5a"/><rect x="16" y="31.6" width="6" height="1.3" fill="#8f8f8f"/><rect x="23" y="31.6" width="5" height="1.3" fill="#8f8f8f"/><rect x="28" y="31.6" width="2" height="1.3" fill="#5a5a5a"/><rect x="30" y="31.6" width="2" height="1.3" fill="#3f6f99"/><rect x="32" y="31.6" width="1" height="1.3" fill="#5a5a5a"/><rect x="12" y="33.5" width="1" height="1.3" fill="#5a5a5a"/><rect x="13" y="33.5" width="2" height="1.3" fill="#3f6f99"/><rect x="15" y="33.5" width="1" height="1.3" fill="#5a5a5a"/><rect x="16" y="33.5" width="6" height="1.3" fill="#8f8f8f"/><rect x="23" y="33.5" width="8" height="1.3" fill="#8f8f8f"/><rect x="32" y="33.5" width="9" height="1.3" fill="#8f8f8f"/><rect x="41" y="33.5" width="2" height="1.3" fill="#5a5a5a"/><rect x="43" y="33.5" width="2" height="1.3" fill="#3f6f99"/><rect x="45" y="33.5" width="1" height="1.3" fill="#5a5a5a"/><rect x="12" y="35.4" width="1" height="1.3" fill="#5a5a5a"/><rect x="13" y="35.4" width="1" height="1.3" fill="#3f6f99"/><rect x="15" y="35.4" width="5" height="1.3" fill="#6f9bb3"/><rect x="20" y="35.4" width="1" height="1.3" fill="#8f8f8f"/><rect x="21" y="35.4" width="10" height="1.3" fill="#94694f"/><rect x="31" y="35.4" width="1" height="1.3" fill="#5a5a5a"/><rect x="32" y="35.4" width="5" height="1.3" fill="#8f8f8f"/><rect x="38" y="35.4" width="6" height="1.3" fill="#8f8f8f"/><rect x="44" y="35.4" width="2" height="1.3" fill="#5a5a5a"/><rect x="46" y="35.4" width="1" height="1.3" fill="#3f6f99"/><rect x="47" y="35.4" width="1" height="1.3" fill="#5a5a5a"/><rect x="8" y="37.3" width="2" height="1.3" fill="#5a5a5a"/><rect x="10" y="37.3" width="6" height="1.3" fill="#3f6f99"/><rect x="16" y="37.3" width="1" height="1.3" fill="#5a5a5a"/><rect x="8" y="41.1" width="1" height="1.3" fill="#5a5a5a"/><rect x="9" y="41.1" width="7" height="1.3" fill="#3f6f99"/><rect x="17" y="41.1" width="5" height="1.3" fill="#6f9bb3"/><rect x="22" y="41.1" width="1" height="1.3" fill="#8f8f8f"/><rect x="23" y="41.1" width="9" height="1.3" fill="#94694f"/><rect x="32" y="41.1" width="1" height="1.3" fill="#5a5a5a"/><rect x="12" y="43" width="1" height="1.3" fill="#5a5a5a"/><rect x="13" y="43" width="1" height="1.3" fill="#3f6f99"/><rect x="14" y="43" width="1" height="1.3" fill="#5a5a5a"/><rect x="16" y="44.9" width="9" height="1.3" fill="#8f8f8f"/><rect x="26" y="44.9" width="3" height="1.3" fill="#8f8f8f"/><rect x="30" y="44.9" width="14" height="1.3" fill="#8f8f8f"/><rect x="45" y="44.9" width="6" height="1.3" fill="#8f8f8f"/><rect x="52" y="44.9" width="8" height="1.3" fill="#8f8f8f"/><rect x="61" y="44.9" width="9" height="1.3" fill="#8f8f8f"/><rect x="71" y="44.9" width="4" height="1.3" fill="#8f8f8f"/><rect x="76" y="44.9" width="1" height="1.3" fill="#8f8f8f"/><rect x="78" y="44.9" width="6" height="1.3" fill="#8f8f8f"/><rect x="16" y="46.8" width="10" height="1.3" fill="#8f8f8f"/><rect x="27" y="46.8" width="2" height="1.3" fill="#8f8f8f"/><rect x="30" y="46.8" width="3" height="1.3" fill="#8f8f8f"/><rect x="34" y="46.8" width="3" height="1.3" fill="#8f8f8f"/><rect x="38" y="46.8" width="8" height="1.3" fill="#8f8f8f"/><rect x="47" y="46.8" width="12" height="1.3" fill="#8f8f8f"/><rect x="60" y="46.8" width="8" height="1.3" fill="#8f8f8f"/><rect x="69" y="46.8" width="8" height="1.3" fill="#8f8f8f"/><rect x="78" y="46.8" width="10" height="1.3" fill="#8f8f8f"/><rect x="16" y="48.7" width="8" height="1.3" fill="#8f8f8f"/><rect x="25" y="48.7" width="5" height="1.3" fill="#8f8f8f"/><rect x="31" y="48.7" width="10" height="1.3" fill="#8f8f8f"/><rect x="42" y="48.7" width="6" height="1.3" fill="#8f8f8f"/><rect x="49" y="48.7" width="10" height="1.3" fill="#8f8f8f"/><rect x="60" y="48.7" width="7" height="1.3" fill="#8f8f8f"/><rect x="68" y="48.7" width="2" height="1.3" fill="#8f8f8f"/><rect x="71" y="48.7" width="5" height="1.3" fill="#8f8f8f"/><rect x="77" y="48.7" width="5" height="1.3" fill="#8f8f8f"/><rect x="16" y="50.6" width="16" height="1.3" fill="#8f8f8f"/><rect x="33" y="50.6" width="3" height="1.3" fill="#8f8f8f"/><rect x="37" y="50.6" width="10" height="1.3" fill="#8f8f8f"/><rect x="48" y="50.6" width="7" height="1.3" fill="#8f8f8f"/><rect x="12" y="52.5" width="2" height="1.3" fill="#5a5a5a"/><rect x="14" y="52.5" width="1" height="1.3" fill="#3f6f99"/><rect x="15" y="52.5" width="1" height="1.3" fill="#5a5a5a"/><rect x="8" y="54.4" width="2" height="1.3" fill="#5a5a5a"/><rect x="10" y="54.4" width="7" height="1.3" fill="#3f6f99"/><rect x="17" y="54.4" width="1" height="1.3" fill="#5a5a5a"/><rect x="8" y="60.1" width="1" height="1.3" fill="#5a5a5a"/><rect x="9" y="60.1" width="7" height="1.3" fill="#3f6f99"/><rect x="17" y="60.1" width="5" height="1.3" fill="#6f9bb3"/><rect x="22" y="60.1" width="1" height="1.3" fill="#8f8f8f"/><rect x="23" y="60.1" width="8" height="1.3" fill="#94694f"/><rect x="31" y="60.1" width="1" height="1.3" fill="#5a5a5a"/><rect x="12" y="62" width="1" height="1.3" fill="#5a5a5a"/><rect x="13" y="62" width="1" height="1.3" fill="#3f6f99"/><rect x="14" y="62" width="1" height="1.3" fill="#5a5a5a"/><rect x="15" y="62" width="1" height="1.3" fill="#8f8f8f"/><rect x="17" y="62" width="9" height="1.3" fill="#8f8f8f"/><rect x="27" y="62" width="1" height="1.3" fill="#5a5a5a"/><rect x="28" y="62" width="4" height="1.3" fill="#3f6f99"/><rect x="33" y="62" width="2" height="1.3" fill="#6f9bb3"/><rect x="35" y="62" width="1" height="1.3" fill="#8f8f8f"/><rect x="36" y="62" width="12" height="1.3" fill="#94694f"/><rect x="48" y="62" width="1" height="1.3" fill="#5a5a5a"/><rect x="49" y="62" width="10" height="1.3" fill="#8f8f8f"/><rect x="59" y="62" width="2" height="1.3" fill="#5a5a5a"/><rect x="61" y="62" width="4" height="1.3" fill="#3f6f99"/><rect x="65" y="62" width="1" height="1.3" fill="#5a5a5a"/><rect x="66" y="62" width="2" height="1.3" fill="#5a5a5a"/><rect x="68" y="62" width="1" height="1.3" fill="#3f6f99"/><rect x="69" y="62" width="1" height="1.3" fill="#5a5a5a"/><rect x="8" y="63.9" width="2" height="1.3" fill="#5a5a5a"/><rect x="10" y="63.9" width="7" height="1.3" fill="#3f6f99"/><rect x="17" y="63.9" width="1" height="1.3" fill="#5a5a5a"/><rect x="8" y="67.7" width="1" height="1.3" fill="#5a5a5a"/><rect x="9" y="67.7" width="7" height="1.3" fill="#3f6f99"/><rect x="16" y="67.7" width="1" height="1.3" fill="#5a5a5a"/><rect x="12" y="69.6" width="1" height="1.3" fill="#5a5a5a"/><rect x="13" y="69.6" width="2" height="1.3" fill="#3f6f99"/><rect x="15" y="69.6" width="1" height="1.3" fill="#5a5a5a"/><rect x="16" y="69.6" width="11" height="1.3" fill="#8f8f8f"/><rect x="28" y="69.6" width="6" height="1.3" fill="#8f8f8f"/><rect x="34" y="69.6" width="2" height="1.3" fill="#5a5a5a"/><rect x="36" y="69.6" width="2" height="1.3" fill="#3f6f99"/><rect x="38" y="69.6" width="1" height="1.3" fill="#5a5a5a"/><rect x="12" y="71.5" width="1" height="1.3" fill="#5a5a5a"/><rect x="13" y="71.5" width="2" height="1.3" fill="#3f6f99"/><rect x="15" y="71.5" width="1" height="1.3" fill="#5a5a5a"/><rect x="16" y="73.4" width="1" height="1.3" fill="#5a5a5a"/><rect x="17" y="73.4" width="2" height="1.3" fill="#3f6f99"/><rect x="19" y="73.4" width="1" height="1.3" fill="#5a5a5a"/><rect x="20" y="73.4" width="6" height="1.3" fill="#8f8f8f"/><rect x="26" y="73.4" width="2" height="1.3" fill="#5a5a5a"/><rect x="28" y="73.4" width="2" height="1.3" fill="#3f6f99"/><rect x="30" y="73.4" width="1" height="1.3" fill="#5a5a5a"/><rect x="16" y="75.3" width="1" height="1.3" fill="#5a5a5a"/><rect x="17" y="75.3" width="2" height="1.3" fill="#3f6f99"/><rect x="19" y="75.3" width="1" height="1.3" fill="#5a5a5a"/><rect x="20" y="75.3" width="10" height="1.3" fill="#8f8f8f"/><rect x="30" y="75.3" width="2" height="1.3" fill="#5a5a5a"/><rect x="32" y="75.3" width="2" height="1.3" fill="#3f6f99"/><rect x="34" y="75.3" width="1" height="1.3" fill="#5a5a5a"/><rect x="16" y="77.2" width="1" height="1.3" fill="#5a5a5a"/><rect x="17" y="77.2" width="2" height="1.3" fill="#3f6f99"/><rect x="19" y="77.2" width="1" height="1.3" fill="#5a5a5a"/><rect x="20" y="77.2" width="4" height="1.3" fill="#8f8f8f"/><rect x="24" y="77.2" width="2" height="1.3" fill="#5a5a5a"/><rect x="26" y="77.2" width="2" height="1.3" fill="#3f6f99"/><rect x="28" y="77.2" width="1" height="1.3" fill="#5a5a5a"/><rect x="16" y="79.1" width="1" height="1.3" fill="#5a5a5a"/><rect x="17" y="79.1" width="2" height="1.3" fill="#3f6f99"/><rect x="19" y="79.1" width="1" height="1.3" fill="#5a5a5a"/><rect x="20" y="79.1" width="4" height="1.3" fill="#8f8f8f"/><rect x="24" y="79.1" width="2" height="1.3" fill="#5a5a5a"/><rect x="26" y="79.1" width="2" height="1.3" fill="#3f6f99"/><rect x="28" y="79.1" width="1" height="1.3" fill="#5a5a5a"/><rect x="16" y="81" width="1" height="1.3" fill="#5a5a5a"/><rect x="17" y="81" width="2" height="1.3" fill="#3f6f99"/><rect x="19" y="81" width="1" height="1.3" fill="#5a5a5a"/><rect x="20" y="81" width="10" height="1.3" fill="#8f8f8f"/><rect x="30" y="81" width="2" height="1.3" fill="#5a5a5a"/><rect x="32" y="81" width="2" height="1.3" fill="#3f6f99"/><rect x="34" y="81" width="1" height="1.3" fill="#5a5a5a"/><rect x="16" y="82.9" width="1" height="1.3" fill="#5a5a5a"/><rect x="17" y="82.9" width="2" height="1.3" fill="#3f6f99"/><rect x="19" y="82.9" width="1" height="1.3" fill="#5a5a5a"/><rect x="20" y="82.9" width="14" height="1.3" fill="#8f8f8f"/><rect x="34" y="82.9" width="2" height="1.3" fill="#5a5a5a"/><rect x="36" y="82.9" width="2" height="1.3" fill="#3f6f99"/><rect x="38" y="82.9" width="1" height="1.3" fill="#5a5a5a"/><rect x="16" y="84.8" width="1" height="1.3" fill="#5a5a5a"/><rect x="17" y="84.8" width="2" height="1.3" fill="#3f6f99"/><rect x="19" y="84.8" width="1" height="1.3" fill="#5a5a5a"/><rect x="20" y="84.8" width="6" height="1.3" fill="#8f8f8f"/><rect x="26" y="84.8" width="2" height="1.3" fill="#5a5a5a"/><rect x="28" y="84.8" width="2" height="1.3" fill="#3f6f99"/><rect x="30" y="84.8" width="1" height="1.3" fill="#5a5a5a"/><rect x="16" y="86.7" width="1" height="1.3" fill="#5a5a5a"/><rect x="17" y="86.7" width="2" height="1.3" fill="#3f6f99"/><rect x="19" y="86.7" width="1" height="1.3" fill="#5a5a5a"/><rect x="20" y="86.7" width="5" height="1.3" fill="#8f8f8f"/><rect x="25" y="86.7" width="2" height="1.3" fill="#5a5a5a"/><rect x="27" y="86.7" width="2" height="1.3" fill="#3f6f99"/><rect x="29" y="86.7" width="1" height="1.3" fill="#5a5a5a"/><rect x="16" y="88.6" width="1" height="1.3" fill="#5a5a5a"/><rect x="17" y="88.6" width="2" height="1.3" fill="#3f6f99"/><rect x="19" y="88.6" width="1" height="1.3" fill="#5a5a5a"/><rect x="20" y="88.6" width="3" height="1.3" fill="#8f8f8f"/><rect x="23" y="88.6" width="2" height="1.3" fill="#5a5a5a"/><rect x="25" y="88.6" width="2" height="1.3" fill="#3f6f99"/><rect x="27" y="88.6" width="1" height="1.3" fill="#5a5a5a"/><rect x="16" y="90.5" width="1" height="1.3" fill="#5a5a5a"/><rect x="17" y="90.5" width="2" height="1.3" fill="#3f6f99"/><rect x="19" y="90.5" width="1" height="1.3" fill="#5a5a5a"/><rect x="20" y="90.5" width="12" height="1.3" fill="#8f8f8f"/><rect x="32" y="90.5" width="2" height="1.3" fill="#5a5a5a"/><rect x="34" y="90.5" width="2" height="1.3" fill="#3f6f99"/><rect x="36" y="90.5" width="1" height="1.3" fill="#5a5a5a"/><rect x="12" y="92.4" width="2" height="1.3" fill="#5a5a5a"/><rect x="14" y="92.4" width="2" height="1.3" fill="#3f6f99"/><rect x="16" y="92.4" width="1" height="1.3" fill="#5a5a5a"/><rect x="8" y="94.3" width="2" height="1.3" fill="#5a5a5a"/><rect x="10" y="94.3" width="7" height="1.3" fill="#3f6f99"/><rect x="17" y="94.3" width="1" height="1.3" fill="#5a5a5a"/><rect x="8" y="98.1" width="1" height="1.3" fill="#5a5a5a"/><rect x="9" y="98.1" width="7" height="1.3" fill="#3f6f99"/><rect x="16" y="98.1" width="1" height="1.3" fill="#5a5a5a"/><rect x="12" y="100" width="1" height="1.3" fill="#5a5a5a"/><rect x="13" y="100" width="2" height="1.3" fill="#3f6f99"/><rect x="15" y="100" width="1" height="1.3" fill="#5a5a5a"/><rect x="16" y="100" width="16" height="1.3" fill="#8f8f8f"/><rect x="32" y="100" width="2" height="1.3" fill="#5a5a5a"/><rect x="34" y="100" width="2" height="1.3" fill="#3f6f99"/><rect x="36" y="100" width="1" height="1.3" fill="#5a5a5a"/><rect x="12" y="101.9" width="1" height="1.3" fill="#5a5a5a"/><rect x="13" y="101.9" width="2" height="1.3" fill="#3f6f99"/><rect x="15" y="101.9" width="1" height="1.3" fill="#5a5a5a"/><rect x="16" y="103.8" width="1" height="1.3" fill="#5a5a5a"/><rect x="17" y="103.8" width="2" height="1.3" fill="#3f6f99"/><rect x="19" y="103.8" width="1" height="1.3" fill="#5a5a5a"/><rect x="20" y="103.8" width="5" height="1.3" fill="#8f8f8f"/><rect x="25" y="103.8" width="2" height="1.3" fill="#5a5a5a"/><rect x="27" y="103.8" width="2" height="1.3" fill="#3f6f99"/><rect x="29" y="103.8" width="1" height="1.3" fill="#5a5a5a"/><rect x="16" y="105.7" width="1" height="1.3" fill="#5a5a5a"/><rect x="17" y="105.7" width="2" height="1.3" fill="#3f6f99"/><rect x="19" y="105.7" width="1" height="1.3" fill="#5a5a5a"/><rect x="20" y="105.7" width="9" height="1.3" fill="#8f8f8f"/><rect x="29" y="105.7" width="2" height="1.3" fill="#5a5a5a"/><rect x="31" y="105.7" width="2" height="1.3" fill="#3f6f99"/><rect x="33" y="105.7" width="1" height="1.3" fill="#5a5a5a"/><rect x="16" y="107.6" width="1" height="1.3" fill="#5a5a5a"/><rect x="17" y="107.6" width="2" height="1.3" fill="#3f6f99"/><rect x="19" y="107.6" width="1" height="1.3" fill="#5a5a5a"/><rect x="20" y="107.6" width="11" height="1.3" fill="#8f8f8f"/><rect x="31" y="107.6" width="2" height="1.3" fill="#5a5a5a"/><rect x="33" y="107.6" width="2" height="1.3" fill="#3f6f99"/><rect x="35" y="107.6" width="1" height="1.3" fill="#5a5a5a"/><rect x="16" y="109.5" width="1" height="1.3" fill="#5a5a5a"/><rect x="17" y="109.5" width="2" height="1.3" fill="#3f6f99"/><rect x="19" y="109.5" width="1" height="1.3" fill="#5a5a5a"/><rect x="20" y="109.5" width="15" height="1.3" fill="#8f8f8f"/><rect x="35" y="109.5" width="2" height="1.3" fill="#5a5a5a"/><rect x="37" y="109.5" width="2" height="1.3" fill="#3f6f99"/><rect x="39" y="109.5" width="1" height="1.3" fill="#5a5a5a"/><rect x="16" y="111.4" width="1" height="1.3" fill="#5a5a5a"/><rect x="17" y="111.4" width="2" height="1.3" fill="#3f6f99"/><rect x="19" y="111.4" width="1" height="1.3" fill="#5a5a5a"/><rect x="20" y="111.4" width="8" height="1.3" fill="#8f8f8f"/><rect x="28" y="111.4" width="2" height="1.3" fill="#5a5a5a"/><rect x="30" y="111.4" width="2" height="1.3" fill="#3f6f99"/><rect x="32" y="111.4" width="1" height="1.3" fill="#5a5a5a"/><rect x="16" y="113.3" width="1" height="1.3" fill="#5a5a5a"/><rect x="17" y="113.3" width="2" height="1.3" fill="#3f6f99"/><rect x="19" y="113.3" width="1" height="1.3" fill="#5a5a5a"/><rect x="20" y="113.3" width="6" height="1.3" fill="#8f8f8f"/><rect x="26" y="113.3" width="2" height="1.3" fill="#5a5a5a"/><rect x="28" y="113.3" width="2" height="1.3" fill="#3f6f99"/><rect x="30" y="113.3" width="1" height="1.3" fill="#5a5a5a"/><rect x="16" y="115.2" width="1" height="1.3" fill="#5a5a5a"/><rect x="17" y="115.2" width="2" height="1.3" fill="#3f6f99"/><rect x="19" y="115.2" width="1" height="1.3" fill="#5a5a5a"/><rect x="20" y="115.2" width="7" height="1.3" fill="#8f8f8f"/><rect x="27" y="115.2" width="2" height="1.3" fill="#5a5a5a"/><rect x="29" y="115.2" width="2" height="1.3" fill="#3f6f99"/><rect x="31" y="115.2" width="1" height="1.3" fill="#5a5a5a"/><rect x="16" y="117.1" width="1" height="1.3" fill="#5a5a5a"/><rect x="17" y="117.1" width="2" height="1.3" fill="#3f6f99"/><rect x="19" y="117.1" width="1" height="1.3" fill="#5a5a5a"/><rect x="20" y="117.1" width="5" height="1.3" fill="#8f8f8f"/><rect x="25" y="117.1" width="2" height="1.3" fill="#5a5a5a"/><rect x="27" y="117.1" width="2" height="1.3" fill="#3f6f99"/><rect x="29" y="117.1" width="1" height="1.3" fill="#5a5a5a"/><rect x="12" y="119" width="2" height="1.3" fill="#5a5a5a"/><rect x="14" y="119" width="2" height="1.3" fill="#3f6f99"/><rect x="16" y="119" width="1" height="1.3" fill="#5a5a5a"/><rect x="8" y="120.9" width="2" height="1.3" fill="#5a5a5a"/><rect x="10" y="120.9" width="7" height="1.3" fill="#3f6f99"/><rect x="17" y="120.9" width="1" height="1.3" fill="#5a5a5a"/><rect x="8" y="124.7" width="1" height="1.3" fill="#5a5a5a"/><rect x="9" y="124.7" width="7" height="1.3" fill="#3f6f99"/><rect x="16" y="124.7" width="1" height="1.3" fill="#5a5a5a"/><rect x="12" y="126.6" width="1" height="1.3" fill="#5a5a5a"/><rect x="13" y="126.6" width="2" height="1.3" fill="#3f6f99"/><rect x="15" y="126.6" width="1" height="1.3" fill="#5a5a5a"/><rect x="16" y="126.6" width="9" height="1.3" fill="#8f8f8f"/><rect x="25" y="126.6" width="2" height="1.3" fill="#5a5a5a"/><rect x="27" y="126.6" width="2" height="1.3" fill="#3f6f99"/><rect x="29" y="126.6" width="1" height="1.3" fill="#5a5a5a"/><rect x="12" y="128.5" width="1" height="1.3" fill="#5a5a5a"/><rect x="13" y="128.5" width="3" height="1.3" fill="#3f6f99"/><rect x="17" y="128.5" width="5" height="1.3" fill="#6f9bb3"/><rect x="23" y="128.5" width="5" height="1.3" fill="#94694f"/><rect x="28" y="128.5" width="1" height="1.3" fill="#5a5a5a"/><rect x="16" y="132.3" width="1" height="1.3" fill="#5a5a5a"/><rect x="17" y="132.3" width="2" height="1.3" fill="#3f6f99"/><rect x="19" y="132.3" width="1" height="1.3" fill="#5a5a5a"/><rect x="37" y="132.3" width="8" height="1.3" fill="#8f8f8f"/><rect x="46" y="132.3" width="2" height="1.3" fill="#8f8f8f"/><rect x="49" y="132.3" width="3" height="1.3" fill="#8f8f8f"/><rect x="53" y="132.3" width="3" height="1.3" fill="#8f8f8f"/><rect x="57" y="132.3" width="7" height="1.3" fill="#8f8f8f"/><rect x="65" y="132.3" width="2" height="1.3" fill="#8f8f8f"/><rect x="68" y="132.3" width="5" height="1.3" fill="#8f8f8f"/><rect x="74" y="132.3" width="2" height="1.3" fill="#8f8f8f"/><rect x="77" y="132.3" width="3" height="1.3" fill="#8f8f8f"/><rect x="20" y="134.2" width="8" height="1.3" fill="#8f8f8f"/><rect x="29" y="134.2" width="8" height="1.3" fill="#8f8f8f"/><rect x="38" y="134.2" width="3" height="1.3" fill="#8f8f8f"/><rect x="16" y="138" width="2" height="1.3" fill="#5a5a5a"/><rect x="18" y="138" width="1" height="1.3" fill="#3f6f99"/><rect x="19" y="138" width="1" height="1.3" fill="#5a5a5a"/><rect x="16" y="141.8" width="1" height="1.3" fill="#5a5a5a"/><rect x="17" y="141.8" width="2" height="1.3" fill="#3f6f99"/><rect x="19" y="141.8" width="1" height="1.3" fill="#5a5a5a"/><rect x="34" y="141.8" width="8" height="1.3" fill="#8f8f8f"/><rect x="43" y="141.8" width="2" height="1.3" fill="#8f8f8f"/><rect x="46" y="141.8" width="3" height="1.3" fill="#8f8f8f"/><rect x="50" y="141.8" width="5" height="1.3" fill="#8f8f8f"/><rect x="56" y="141.8" width="2" height="1.3" fill="#8f8f8f"/><rect x="59" y="141.8" width="1" height="1.3" fill="#8f8f8f"/><rect x="20" y="143.7" width="2" height="1.3" fill="#8f8f8f"/><rect x="23" y="143.7" width="5" height="1.3" fill="#8f8f8f"/><rect x="29" y="143.7" width="2" height="1.3" fill="#8f8f8f"/><rect x="32" y="143.7" width="4" height="1.3" fill="#8f8f8f"/><rect x="37" y="143.7" width="6" height="1.3" fill="#8f8f8f"/><rect x="44" y="143.7" width="8" height="1.3" fill="#8f8f8f"/><rect x="53" y="143.7" width="4" height="1.3" fill="#8f8f8f"/><rect x="58" y="143.7" width="3" height="1.3" fill="#8f8f8f"/><rect x="16" y="145.6" width="2" height="1.3" fill="#5a5a5a"/><rect x="18" y="145.6" width="1" height="1.3" fill="#3f6f99"/><rect x="19" y="145.6" width="1" height="1.3" fill="#5a5a5a"/><rect x="12" y="147.5" width="2" height="1.3" fill="#5a5a5a"/><rect x="14" y="147.5" width="3" height="1.3" fill="#3f6f99"/><rect x="17" y="147.5" width="1" height="1.3" fill="#5a5a5a"/><rect x="8" y="149.4" width="2" height="1.3" fill="#5a5a5a"/><rect x="10" y="149.4" width="7" height="1.3" fill="#3f6f99"/><rect x="17" y="149.4" width="1" height="1.3" fill="#5a5a5a"/><rect x="8" y="153.2" width="1" height="1.3" fill="#5a5a5a"/><rect x="9" y="153.2" width="7" height="1.3" fill="#3f6f99"/><rect x="17" y="153.2" width="5" height="1.3" fill="#6f9bb3"/><rect x="23" y="153.2" width="7" height="1.3" fill="#94694f"/><rect x="30" y="153.2" width="1" height="1.3" fill="#5a5a5a"/><rect x="12" y="155.1" width="1" height="1.3" fill="#5a5a5a"/><rect x="13" y="155.1" width="1" height="1.3" fill="#3f6f99"/><rect x="15" y="155.1" width="4" height="1.3" fill="#6f9bb3"/><rect x="20" y="155.1" width="15" height="1.3" fill="#94694f"/><rect x="35" y="155.1" width="1" height="1.3" fill="#5a5a5a"/><rect x="44" y="155.1" width="8" height="1.3" fill="#8f8f8f"/><rect x="12" y="157" width="1" height="1.3" fill="#5a5a5a"/><rect x="13" y="157" width="1" height="1.3" fill="#3f6f99"/><rect x="15" y="157" width="4" height="1.3" fill="#6f9bb3"/><rect x="20" y="157" width="37" height="1.3" fill="#94694f"/><rect x="57" y="157" width="1" height="1.3" fill="#5a5a5a"/><rect x="70" y="157" width="7" height="1.3" fill="#6f9bb3"/><rect x="78" y="157" width="8" height="1.3" fill="#94694f"/><rect x="87" y="157" width="6" height="1.3" fill="#8f8f8f"/><rect x="12" y="158.9" width="1" height="1.3" fill="#5a5a5a"/><rect x="13" y="158.9" width="1" height="1.3" fill="#3f6f99"/><rect x="15" y="158.9" width="4" height="1.3" fill="#6f9bb3"/><rect x="20" y="158.9" width="15" height="1.3" fill="#94694f"/><rect x="35" y="158.9" width="1" height="1.3" fill="#5a5a5a"/><rect x="42" y="158.9" width="6" height="1.3" fill="#8f8f8f"/><rect x="8" y="160.8" width="2" height="1.3" fill="#5a5a5a"/><rect x="10" y="160.8" width="7" height="1.3" fill="#3f6f99"/><rect x="17" y="160.8" width="1" height="1.3" fill="#5a5a5a"/><rect x="4" y="164.6" width="2" height="1.3" fill="#5a5a5a"/><rect x="6" y="164.6" width="4" height="1.3" fill="#3f6f99"/><rect x="10" y="164.6" width="1" height="1.3" fill="#5a5a5a"/><rect x="4" y="168.4" width="1" height="1.3" fill="#5a5a5a"/><rect x="5" y="168.4" width="6" height="1.3" fill="#3f6f99"/><rect x="12" y="168.4" width="3" height="1.3" fill="#6f9bb3"/><rect x="16" y="168.4" width="11" height="1.3" fill="#94694f"/><rect x="27" y="168.4" width="1" height="1.3" fill="#5a5a5a"/><rect x="36" y="168.4" width="2" height="1.3" fill="#5a5a5a"/><rect x="38" y="168.4" width="6" height="1.3" fill="#3f6f99"/><rect x="44" y="168.4" width="1" height="1.3" fill="#5a5a5a"/><rect x="0" y="170.3" width="2" height="1.3" fill="#5a5a5a"/><rect x="2" y="170.3" width="4" height="1.3" fill="#3f6f99"/><rect x="6" y="170.3" width="1" height="1.3" fill="#5a5a5a"/><rect x="0" y="172.2" width="2" height="1.3" fill="#5a5a5a"/><rect x="2" y="172.2" width="4" height="1.3" fill="#3f6f99"/><rect x="6" y="172.2" width="1" height="1.3" fill="#5a5a5a"/><rect x="-5.5" y="20.5" width="2" height="2" fill="#1b81a8"/><rect x="-5.5" y="59.6" width="2" height="2" fill="#1b81a8"/></svg>
<div class="b" style="left:1607px;top:0;width:1px;height:754px;background:#1a1a1a"></div>
<div class="b" style="left:1607.5px;top:0;width:14.5px;height:226px;background:#434343"></div>
<div class="b" style="left:1608px;top:63px;width:6px;height:6px;background:#2a76a8"></div>
<div class="b" style="left:1608px;top:182.5px;width:14px;height:2px;background:#8f8f8f"></div>
<div class="b" style="left:1608px;top:184.5px;width:6px;height:5.5px;background:#2a76a8"></div>
</div>
<div class="b" style="left:297px;top:863px;width:1622px;height:142px;background:#181818;"></div>
<div class="b" style="left:297px;top:863px;width:1622px;height:1px;background:#2b2b2b;"></div>
<svg class="x" style="left:321.3px;top:875px" width="68" height="20"><text y="14.37" font-size="12.6" fill="#9d9d9d" textLength="64.9" lengthAdjust="spacingAndGlyphs">PROBLEMS</text></svg>
<svg class="x" style="left:413.6px;top:875px" width="53" height="20"><text y="14.37" font-size="12.6" fill="#9d9d9d" textLength="50" lengthAdjust="spacingAndGlyphs">OUTPUT</text></svg>
<svg class="x" style="left:491.3px;top:875px" width="107" height="20"><text y="14.37" font-size="12.6" fill="#9d9d9d" textLength="103.9" lengthAdjust="spacingAndGlyphs">DEBUG CONSOLE</text></svg>
<svg class="x" style="left:623px;top:875px" width="65" height="20"><text y="14.37" font-size="12.6" fill="#d6d6d6" textLength="61.6" lengthAdjust="spacingAndGlyphs">TERMINAL</text></svg>
<svg class="x" style="left:713px;top:875px" width="42" height="20"><text y="14.37" font-size="12.6" fill="#9d9d9d" textLength="38.9" lengthAdjust="spacingAndGlyphs">PORTS</text></svg>
<svg class="x" style="left:779.6px;top:875px" width="99" height="20"><text y="14.37" font-size="12.6" fill="#9d9d9d" textLength="95.6" lengthAdjust="spacingAndGlyphs">QUERY RESULTS</text></svg>
<div class="b" style="left:621.3px;top:896.6px;width:65.7px;height:1.3px;background:#0078d4;"></div>
<svg style="left:1599px;top:876.2px;" width="17" height="17" viewBox="0 0 17 16.5" fill="none"><rect x="0.6" y="0.6" width="15.8" height="15.3" rx="2.4" stroke="#cccccc" stroke-width="1.1"/><path d="M3.5 5L6.8 8.3L3.5 11.6M8 12H13" stroke="#cccccc" stroke-width="1.1" fill="none" stroke-linecap="round" stroke-linejoin="round"/></svg>
<svg class="x" style="left:1621.8px;top:874.8px" width="67" height="20"><text y="14.99" font-size="14.4" fill="#cccccc" textLength="63.6" lengthAdjust="spacingAndGlyphs">powershell</text></svg>
<svg style="left:1698px;top:876.5px;" width="15.7" height="15.7" viewBox="0 0 16 16" fill="none"><path d="M8 0.5V15.5M0.5 8H15.5" stroke="#cccccc" stroke-width="1" fill="none" stroke-linejoin="round" stroke-linecap="butt"/></svg>
<svg style="left:1721.6px;top:880.3px;" width="9" height="9" viewBox="0 0 10 10" fill="none"><path d="M1 3L5 7L9 3" stroke="#cccccc" stroke-width="1" fill="none" stroke-linecap="round" stroke-linejoin="round"/></svg>
<svg style="left:1744.8px;top:876px;" width="17.2" height="17.2" viewBox="0 0 17.5 17.5" fill="none"><rect x="0.6" y="0.6" width="16.3" height="16.3" rx="2.4" stroke="#cccccc" stroke-width="1.1"/><path d="M8.75 0.6V16.9" stroke="#cccccc" stroke-width="1.1"/></svg>
<svg style="left:1777px;top:875.5px;" width="15" height="16.8" viewBox="0 0 15 16.8" fill="none"><path d="M0.8 3.3H14.2M5 3.3V2A1.3 1.3 0 0 1 6.3 0.7H8.7A1.3 1.3 0 0 1 10 2V3.3" stroke="#cccccc" stroke-width="1.1" fill="none" stroke-linecap="round" stroke-linejoin="round"/><path d="M2.3 3.5L3.2 14.6A1.5 1.5 0 0 0 4.7 16H10.3A1.5 1.5 0 0 0 11.8 14.6L12.7 3.5" stroke="#cccccc" stroke-width="1.1" fill="none" stroke-linecap="round" stroke-linejoin="round"/><path d="M6 6.5V12.8M9 6.5V12.8" stroke="#cccccc" stroke-width="1.1" fill="none" stroke-linecap="round" stroke-linejoin="round"/></svg>
<svg style="left:1805.6px;top:875.4px;" width="19.2" height="19.2" viewBox="0 0 16 16" fill="none"><circle cx="4.1" cy="8" r="1.05" fill="#cccccc"/><circle cx="8" cy="8" r="1.05" fill="#cccccc"/><circle cx="11.9" cy="8" r="1.05" fill="#cccccc"/></svg>
<div class="b" style="left:1838.2px;top:875px;width:1.6px;height:20px;background:#5a5a5a;"></div>
<svg style="left:1854.7px;top:877px;" width="15.6" height="15.6" viewBox="0 0 16 16" fill="none"><path d="M0.6 5V2.6A2 2 0 0 1 2.6 0.6H5M11 0.6H13.4A2 2 0 0 1 15.4 2.6V5M15.4 11V13.4A2 2 0 0 1 13.4 15.4H11M5 15.4H2.6A2 2 0 0 1 0.6 13.4V11" stroke="#cccccc" stroke-width="1.2" fill="none" stroke-linecap="round" stroke-linejoin="round"/></svg>
<svg style="left:1888.3px;top:879.3px;" width="11" height="11" viewBox="0 0 11 11" fill="none"><path d="M0.4 0.4L10.6 10.6M10.6 0.4L0.4 10.6" stroke="#cccccc" stroke-width="1.1"/></svg>
<svg class="x m" style="left:321.4px;top:945.1px" width="264" height="20"><text y="14.05" font-size="15.2" fill="#cccccc" textLength="261.5" lengthAdjust="spacingAndGlyphs" transform="translate(0 14.05) scale(1 1.12) translate(0 -14.05)">PS D:\Welcom to my Portfolio&gt;</text></svg>
<div class="b" style="left:1904px;top:921px;width:15px;height:84px;background:#181818;border-left:1px solid #0f0f0f;border-top:1px solid #0f0f0f;"></div>
<div class="b" style="left:1905px;top:973.5px;width:5px;height:6.5px;background:#5a5a5a;"></div>
<div class="b" style="left:0px;top:1005px;width:1919px;height:26.5px;background:#181818;"></div>
<div class="b" style="left:0px;top:1005px;width:1919px;height:1px;background:#2b2b2b;"></div>
<svg style="left:13.7px;top:1010px;" width="12.5" height="15.5" viewBox="0 0 12.5 15.5" fill="none"><path d="M0.5 5.5L5.6 10.2L0.5 14.8M11.5 0.5L6.5 5.5L11.5 9.8" stroke="#cccccc" stroke-width="1" fill="none" stroke-linecap="butt" stroke-linejoin="miter"/></svg>
<svg style="left:49.9px;top:1008.6px;" width="17.5" height="18.5" viewBox="0 0 17.5 18.5" fill="none"><circle cx="3.3" cy="2.9" r="2.5" stroke="#cccccc" stroke-width="1"/><circle cx="3.3" cy="15.3" r="2.5" stroke="#cccccc" stroke-width="1"/><rect x="9.6" y="4.4" width="4.4" height="4" rx="1" stroke="#cccccc" stroke-width="1"/><path d="M3.3 5.4V12.8M3.3 11.2H7.5" stroke="#cccccc" stroke-width="1" fill="none" stroke-linecap="round" stroke-linejoin="round"/><circle cx="12.2" cy="13.2" r="4.9" fill="#cccccc"/><path d="M12.2 10.2V16.2M9.6 11.7L14.8 14.7M14.8 11.7L9.6 14.7" stroke="#181818" stroke-width="0.9"/></svg>
<svg class="x" style="left:70.8px;top:1007.9px" width="38" height="20"><text y="14.99" font-size="14.4" fill="#cccccc" textLength="35.5" lengthAdjust="spacingAndGlyphs">main*</text></svg>
<svg style="left:115.5px;top:1009.7px;" width="16" height="16" viewBox="0 0 16 16" fill="none"><path d="M6.3 1.6A6.2 6.2 0 0 0 3.4 12.7M9.7 14.4A6.2 6.2 0 0 0 12.6 3.3" stroke="#cccccc" stroke-width="1" fill="none" stroke-linecap="round" stroke-linejoin="round"/><circle cx="8.3" cy="1.5" r="1.4" fill="#cccccc"/><circle cx="7.7" cy="14.5" r="1.4" fill="#cccccc"/><path d="M1 10.5L3.4 12.8L5.9 11.3M15 5.5L12.6 3.2L10.1 4.7" stroke="#cccccc" stroke-width="0.9" fill="none" stroke-linecap="round" stroke-linejoin="round"/></svg>
<svg style="left:152.8px;top:1009.7px;" width="17.2" height="17.2" viewBox="0 0 17.2 17.2" fill="none"><circle cx="8.6" cy="8.6" r="8" stroke="#cccccc" stroke-width="1"/><path d="M5.5 5.5L11.7 11.7M11.7 5.5L5.5 11.7" stroke="#cccccc" stroke-width="1" fill="none" stroke-linecap="round" stroke-linejoin="round"/></svg>
<svg class="x" style="left:174.8px;top:1007.9px" width="11" height="20"><text y="14.99" font-size="14.4" fill="#cccccc" textLength="8" lengthAdjust="spacingAndGlyphs">0</text></svg>
<svg style="left:188px;top:1009.6px;" width="16.7" height="16.5" viewBox="0 0 16.7 16.5" fill="none"><path d="M8.3 1L16 15.5H0.6z" stroke="#cccccc" stroke-width="1" fill="none" stroke-linecap="round" stroke-linejoin="round"/><path d="M8.3 6V10.8" stroke="#cccccc" stroke-width="1.1" fill="none" stroke-linecap="round" stroke-linejoin="round"/><circle cx="8.3" cy="13" r="0.7" fill="#cccccc"/></svg>
<svg class="x" style="left:209.8px;top:1007.9px" width="11" height="20"><text y="14.99" font-size="14.4" fill="#cccccc" textLength="8" lengthAdjust="spacingAndGlyphs">0</text></svg>
<svg style="left:240.4px;top:1010.2px;" width="12" height="16" viewBox="0 0 12 16" fill="none"><ellipse cx="6" cy="2.7" rx="5.3" ry="2" stroke="#cccccc" stroke-width="1"/><path d="M0.7 2.7V13.3C0.7 14.4 3 15.3 6 15.3S11.3 14.4 11.3 13.3V2.7" stroke="#cccccc" stroke-width="1" fill="none" stroke-linecap="round" stroke-linejoin="round"/></svg>
<svg class="x" style="left:260px;top:1007.9px" width="54" height="20"><text y="14.99" font-size="14.4" fill="#cccccc" textLength="51.5" lengthAdjust="spacingAndGlyphs">Connect</text></svg>
<svg class="x" style="left:1320.5px;top:1007.9px" width="78" height="20"><text y="14.99" font-size="14.4" fill="#cccccc" textLength="74.5" lengthAdjust="spacingAndGlyphs">Ln 31, Col 8</text></svg>
<svg class="x" style="left:1414px;top:1007.9px" width="59" height="20"><text y="14.99" font-size="14.4" fill="#cccccc" textLength="56" lengthAdjust="spacingAndGlyphs">Spaces: 4</text></svg>
<svg class="x" style="left:1489px;top:1007.9px" width="41" height="20"><text y="14.99" font-size="14.4" fill="#cccccc" textLength="38.4" lengthAdjust="spacingAndGlyphs">UTF-8</text></svg>
<svg class="x" style="left:1546.3px;top:1007.9px" width="34" height="20"><text y="14.99" font-size="14.4" fill="#cccccc" textLength="31" lengthAdjust="spacingAndGlyphs">CRLF</text></svg>
<span class="t" style="left:1599.1px;top:1007.2px;font-size:15.5px;color:#cccccc;letter-spacing:4.2px;line-height:20px;transform:scaleX(0.9)">{}</span><svg style="left:1608.2px;top:1020px;" width="7.4" height="7.4" viewBox="0 0 7.4 7.4" fill="none"><circle cx="3.7" cy="3.7" r="3.5" fill="#cccccc"/><path d="M2.3 2.3L5.1 5.1M5.1 2.3L2.3 5.1" stroke="#181818" stroke-width="0.9"/></svg>
<svg class="x" style="left:1623px;top:1007.9px" width="39" height="20"><text y="14.99" font-size="14.4" fill="#cccccc" textLength="36.4" lengthAdjust="spacingAndGlyphs">HTML</text></svg>
<svg style="left:1679.3px;top:1009.8px;" width="19.5" height="17.2" viewBox="0 0 19.5 17.2" fill="none"><path d="M3 6.3C3 3 4.4 1.2 7 1.2C8.4 1.2 9.3 1.9 9.75 2.8C10.2 1.9 11.1 1.2 12.5 1.2C15.1 1.2 16.5 3 16.5 6.3C17.9 7.4 18.6 9 18.6 11C18.6 13.6 14.6 16.2 9.75 16.2C4.9 16.2 0.9 13.6 0.9 11C0.9 9 1.6 7.4 3 6.3z" fill="#cccccc"/><path d="M5 3.5H8.3V7H5zM11.2 3.5H14.5V7H11.2z" fill="#181818" opacity="0.85"/><path d="M6.3 9.3V12.8M13.2 9.3V12.8" stroke="#181818" stroke-width="1.5"/><path d="M2 0.3L18.2 16.6" stroke="#181818" stroke-width="3"/><path d="M1.3 0.8L17.5 17" stroke="#cccccc" stroke-width="1.1"/></svg>
<svg style="left:1717.5px;top:1011px;" width="17.4" height="14" viewBox="0 0 17.4 14" fill="none"><circle cx="8.7" cy="7" r="1.5" fill="#cccccc"/><path d="M5.5 4A4.3 4.3 0 0 0 5.5 10M11.9 4A4.3 4.3 0 0 1 11.9 10" stroke="#cccccc" stroke-width="1" fill="none" stroke-linecap="round" stroke-linejoin="round"/><path d="M3.2 1.5A7.7 7.7 0 0 0 3.2 12.5M14.2 1.5A7.7 7.7 0 0 1 14.2 12.5" stroke="#cccccc" stroke-width="1" fill="none" stroke-linecap="round" stroke-linejoin="round"/></svg>
<svg class="x" style="left:1740.6px;top:1007.9px" width="48" height="20"><text y="14.99" font-size="14.4" fill="#cccccc" textLength="45.5" lengthAdjust="spacingAndGlyphs">Go Live</text></svg>
<svg style="left:1805.6px;top:1012.3px;" width="17.5" height="11.5" viewBox="0 0 17.5 11.5" fill="none"><path d="M0.7 6.5L4.5 10.3L13 1.5" stroke="#cccccc" stroke-width="1.1" fill="none" stroke-linecap="butt" stroke-linejoin="miter"/><path d="M7 9.3L8.3 10.5L17 1.8" stroke="#cccccc" stroke-width="1.1" fill="none" stroke-linecap="butt" stroke-linejoin="miter"/></svg>
<svg class="x" style="left:1828px;top:1007.9px" width="49" height="20"><text y="14.99" font-size="14.4" fill="#cccccc" textLength="45.6" lengthAdjust="spacingAndGlyphs">Prettier</text></svg>
<svg style="left:1895px;top:1008.9px;" width="14.8" height="18" viewBox="0 2 14.8 15.5" fill="none"><path d="M2.6 12.2V7.5A4.8 4.8 0 0 1 12.2 7.5V12.2L13.9 14.3H0.9L2.6 12.2z" stroke="#cccccc" stroke-width="1" fill="none" stroke-linecap="round" stroke-linejoin="round"/><path d="M5.6 15.5A1.9 1.9 0 0 0 9.2 15.5" stroke="#cccccc" stroke-width="1" fill="none" stroke-linecap="round" stroke-linejoin="round"/></svg>
<div class="b" style="left:0px;top:1031px;width:1919px;height:47px;background:#1c1c1c;"></div>
<div class="b" style="left:0px;top:1031px;width:1919px;height:1px;background:#464646;"></div>
<svg style="left:20px;top:1037px;" width="28" height="28" viewBox="0 0 28 28" fill="none"><defs><linearGradient id="g1" x1="0" y1="0" x2="1" y2="1"><stop offset="0" stop-color="#f9b52a"/><stop offset="1" stop-color="#f0721a"/></linearGradient></defs><circle cx="10.8" cy="17" r="10" fill="url(#g1)"/><circle cx="18" cy="8.3" r="7.9" fill="#f58ea0"/></svg>
<span class="t" style="left:35.3px;top:1039.3px;font-size:10.5px;color:#3a1a1a;line-height:12px;height:12px;-webkit-text-stroke:0px #181818;">1</span>
<svg class="x" style="left:50.3px;top:1039.2px" width="28" height="16"><text y="12.3" font-size="12.4" fill="#ffffff" textLength="25.2" lengthAdjust="spacingAndGlyphs" font-weight="700" style="stroke:#1c1c1c;stroke-width:0.3px">33°C</text></svg>
<svg class="x" style="left:50.3px;top:1055.2px" width="37" height="16"><text y="12.37" font-size="12.6" fill="#d0d0d0" textLength="34" lengthAdjust="spacingAndGlyphs" style="stroke:none">Sunny</text></svg>
<svg style="left:352.5px;top:1043.5px;" width="23.6" height="23.6" viewBox="0 0 23.6 23.6" fill="none"><defs><linearGradient id="g2" x1="0" y1="0" x2="1" y2="1"><stop offset="0" stop-color="#6fd6ff"/><stop offset="1" stop-color="#0a8af0"/></linearGradient></defs><path d="M0 0H11.2V11.2H0zM12.4 0H23.6V11.2H12.4zM0 12.4H11.2V23.6H0zM12.4 12.4H23.6V23.6H12.4z" fill="url(#g2)"/></svg>
<div class="b" style="left:389px;top:1039px;width:219px;height:32.5px;background:#3a3a3a;border:1px solid #4c4c4c;border-radius:16.5px;"></div>
<svg style="left:400.5px;top:1047.5px;" width="16" height="16" viewBox="0 0 16 16" fill="none"><circle cx="6.3" cy="6.3" r="5.1" stroke="#f2f2f2" stroke-width="1.8" fill="#555"/><path d="M10 10L14.3 14.3" stroke="#f2f2f2" stroke-width="2" stroke-linecap="round"/></svg>
<svg class="x" style="left:425.6px;top:1047px" width="51" height="20"><text y="15.41" font-size="15.6" fill="#e6e6e6" textLength="47.6" lengthAdjust="spacingAndGlyphs" style="stroke:#e6e6e6;stroke-width:0.3px">Search</text></svg>
<svg style="left:558.5px;top:1048.5px;" width="48" height="20" viewBox="0 0 48 20" fill="none"><defs><linearGradient id="g3" x1="0" y1="0" x2="0" y2="1"><stop offset="0" stop-color="#3e5ccc"/><stop offset="0.35" stop-color="#6f85dc"/><stop offset="0.55" stop-color="#cfc8f2"/><stop offset="0.85" stop-color="#f0d2ea"/><stop offset="1" stop-color="#8fb0ea"/></linearGradient></defs><path d="M0.5 16.5L5 12.3L10 8.3L14 6L18 4.3L22 2.3L26 2.8L30 1L34 1.7L38 0.5L42 0.7L45.5 2.2Q48.3 8 46.5 14Q45 18 41.5 19.7H5Q2 19 0.5 16.5z" fill="url(#g3)"/><path d="M8 16L12 13.5L16 15.5L19 17.5L14 18.8H9z" fill="#5f7fd6" opacity="0.85"/><path d="M20 9L27 7.5L32 10L28 14L23 16L19 12z" fill="#7a90e0" opacity="0.8"/><path d="M36 9L41 11L44 14L40 15L36 13z" fill="#6f8ce0" opacity="0.8"/></svg>
<div class="b" style="left:745px;top:1035px;width:40px;height:40.5px;background:#2b2b2b;border-radius:5px;border:1px solid #333;"></div>
<div class="b" style="left:757px;top:1070.8px;width:16px;height:3px;background:#b4bdc4;border-radius:1.5px;"></div>
<svg style="left:621px;top:1043px;" width="24" height="24" viewBox="0 0 24 24" fill="none"><defs><linearGradient id="g4" x1="0" y1="0" x2="1" y2="1"><stop offset="0" stop-color="#ffffff"/><stop offset="1" stop-color="#cfcfcf"/></linearGradient></defs><rect x="0" y="7" width="17.5" height="15.5" rx="1.5" fill="#6e6e6e"/><rect x="6" y="1" width="18" height="15.5" rx="1.5" fill="url(#g4)"/><rect x="6" y="7" width="11.5" height="9.5" fill="#a8a8a8" opacity="0.85"/></svg>
<svg style="left:665px;top:1043px;" width="24" height="24" viewBox="0 0 24 24" fill="none"><defs><linearGradient id="g5" x1="0" y1="0" x2="0" y2="1"><stop offset="0" stop-color="#ffd54a"/><stop offset="1" stop-color="#f7b92e"/></linearGradient><linearGradient id="g6" x1="0" y1="0" x2="0" y2="1"><stop offset="0" stop-color="#2a8fe0"/><stop offset="1" stop-color="#1667b8"/></linearGradient></defs><path d="M0.5 3.5A1.5 1.5 0 0 1 2 2H8.5L11 4.5H22A1.5 1.5 0 0 1 23.5 6V8H0.5z" fill="#e8a41c"/><rect x="0.5" y="5.5" width="23.5" height="17" rx="1.5" fill="url(#g5)"/><path d="M5 22.5V18.5A2 2 0 0 1 7 16.5H17A2 2 0 0 1 19 18.5V22.5z" fill="url(#g6)"/></svg>
<svg style="left:709px;top:1043px;" width="24" height="24" viewBox="0 0 24 24" fill="none"><path d="M7 7V4.5A2.5 2.5 0 0 1 9.5 2H14.5A2.5 2.5 0 0 1 17 4.5V7" stroke="#35a5ea" stroke-width="1.8" fill="none"/><path d="M0.5 7A1.5 1.5 0 0 1 2 5.5H22A1.5 1.5 0 0 1 23.5 7V20A3 3 0 0 1 20.5 23H3.5A3 3 0 0 1 0.5 20z" fill="#f4f4f4"/><rect x="7.3" y="9.8" width="4.2" height="4.2" fill="#f25022"/><rect x="12.5" y="9.8" width="4.2" height="4.2" fill="#7fba00"/><rect x="7.3" y="15" width="4.2" height="4.2" fill="#00a4ef"/><rect x="12.5" y="15" width="4.2" height="4.2" fill="#ffb900"/></svg>
<svg style="left:753.3px;top:1043px;" width="24" height="24" viewBox="0 0 24 24" fill="none"><path d="M17.6 0.6L8.2 9.4L2.6 5.2L0.3 6.5V17.5L2.6 18.8L8.2 14.6L17.6 23.4L23.6 21V3z" fill="#1f8ad2"/><path d="M17.6 0.6L23.6 3V21L17.6 23.4z" fill="#35a9f0"/><path d="M0.3 6.5L17.6 23.4L23.6 21L2.6 5.2z" fill="#1a7cc4" opacity="0.9"/><path d="M17.6 6.8V17.2L10.8 12z" fill="#2b2b2b"/></svg>
<svg style="left:796.8px;top:1043px;" width="24" height="24" viewBox="0 0 24 24" fill="none"><circle cx="12" cy="11.8" r="10.6" fill="#ffffff"/><ellipse cx="12" cy="11.6" rx="6.4" ry="5.1" fill="#1c1c1c"/><path d="M6 6.3L9.6 7.6L6.4 11.2zM18 6.3L14.4 7.6L17.6 11.2z" fill="#1c1c1c"/><path d="M9.8 15.5H14.2V22.3L12 22.6L9.8 22.3z" fill="#1c1c1c"/><path d="M4.5 16.3C6.5 16.5 6.8 18.8 9.8 18.6" stroke="#1c1c1c" stroke-width="1.2" fill="none"/></svg>
<svg style="left:841px;top:1043px;" width="24" height="24" viewBox="0 0 24 24" fill="none"><defs><linearGradient id="g7" x1="0" y1="0" x2="1" y2="1"><stop offset="0" stop-color="#9be070"/><stop offset="1" stop-color="#46c08c"/></linearGradient><linearGradient id="g8" x1="0" y1="0" x2="1" y2="1"><stop offset="0" stop-color="#45b8a4"/><stop offset="1" stop-color="#2a9a92"/></linearGradient><linearGradient id="g9" x1="0" y1="0" x2="1" y2="1"><stop offset="0" stop-color="#4fc0a6"/><stop offset="1" stop-color="#2b9a96"/></linearGradient></defs><path d="M0.5 1H7A5 5 0 0 1 12 6V12H5.5A5 5 0 0 1 0.5 7z" fill="url(#g7)"/><path d="M24 1H17.5A5 5 0 0 0 12.5 6V12H19A5 5 0 0 0 24 7z" fill="url(#g8)"/><path d="M0.5 23.5H7A5 5 0 0 0 12 18.5V12.5H5.5A5 5 0 0 0 0.5 17.5z" fill="url(#g9)"/><circle cx="18.7" cy="18.7" r="5.3" fill="#2a86e4"/></svg>
<svg style="left:885px;top:1043px;" width="24" height="24" viewBox="0 0 24 24" fill="none"><defs><linearGradient id="g10" x1="0" y1="0" x2="1" y2="1"><stop offset="0" stop-color="#5ccaf8"/><stop offset="1" stop-color="#2a78e4"/></linearGradient></defs><path d="M12.5 1.5L23 8V20.5A2 2 0 0 1 21 22.5H4A2 2 0 0 1 2 20.5V8z" fill="url(#g10)"/><path d="M9 6.5L19 3.8L23 8L12 12z" fill="#3f5fdc" opacity="0.9"/><path d="M2 13L12.5 17.5L23 12V20.5A2 2 0 0 1 21 22.5H4A2 2 0 0 1 2 20.5z" fill="#3aa6f5"/><rect x="0.5" y="11.5" width="10" height="9.5" rx="2" fill="#1363c8"/><circle cx="5.5" cy="16.3" r="2.5" stroke="#ffffff" stroke-width="1.6" fill="none"/></svg>
<svg style="left:929px;top:1043px;" width="24" height="24" viewBox="0 0 24 24" fill="none"><rect x="3" y="2" width="18" height="21.5" rx="1.5" fill="#5fcbec"/><rect x="3" y="21.5" width="18" height="2" fill="#a4623f"/><rect x="3" y="20.3" width="18" height="1.4" fill="#f4ebe2"/><path d="M6 8.2H18M6 12.3H18M6 16.4H18" stroke="#1583ad" stroke-width="2"/><path d="M5.5 1.2V3.2M8.5 1.2V3.2M11.5 1.2V3.2M14.5 1.2V3.2M17.5 1.2V3.2M20 1.2V3.2" stroke="#3fa7cc" stroke-width="1.3"/></svg>
<svg style="left:973px;top:1043px;" width="24" height="24" viewBox="0 0 24 24" fill="none"><rect x="0.5" y="0.5" width="23.5" height="23" fill="#1c2f66"/><path d="M7 6H17.5V13C17.5 17 15 19.5 12.2 20.8C9.5 19.5 7 17 7 13z" fill="#f2f2f2"/><path d="M7.5 13.5L12.2 16.5L17 13.5M9.5 9H15" stroke="#1c2f66" stroke-width="1.1" fill="none"/><circle cx="12.2" cy="3.7" r="1.3" stroke="#f2f2f2" stroke-width="0.8" fill="none"/></svg>
<svg style="left:1017px;top:1043px;" width="24" height="24" viewBox="0 0 24 24" fill="none"><circle cx="12" cy="12" r="11.5" fill="#ffffff"/><path d="M12 0.5A11.5 11.5 0 0 1 21.96 6.25H12A5.75 5.75 0 0 0 7.02 9.13L2.04 6.25A11.5 11.5 0 0 1 12 0.5z" fill="#ea4335"/><path d="M2.04 6.25L7.02 14.88A5.75 5.75 0 0 0 12 17.75L9.5 23.2A11.5 11.5 0 0 1 2.04 6.25z" fill="#34a853"/><path d="M21.96 6.25A11.5 11.5 0 0 1 9.5 23.2L16.98 14.88A5.75 5.75 0 0 0 16.98 9.13L12 6.25z" fill="#fbbc05"/><path d="M12 0.5A11.5 11.5 0 0 1 21.96 6.25H12z" fill="#ea4335"/><circle cx="12" cy="12" r="5.4" fill="#ffffff"/><circle cx="12" cy="12" r="4.2" fill="#4285f4"/></svg>
<svg style="left:1061px;top:1043px;" width="24" height="24" viewBox="0 0 24 24" fill="none"><rect x="7" y="1.5" width="17" height="21" rx="1.5" fill="#2b7cd3"/><rect x="7" y="1.5" width="17" height="5.5" fill="#41a5ee"/><rect x="7" y="12" width="17" height="5.3" fill="#185abd"/><rect x="7" y="17.3" width="17" height="5.2" fill="#103f91"/><rect x="0.5" y="6" width="12" height="12" rx="1.2" fill="#185abd"/><text x="6.5" y="15.3" font-family="Liberation Sans, sans-serif" font-weight="700" font-size="9.5" fill="#ffffff" stroke="#ffffff" stroke-width="0.4" text-anchor="middle">W</text></svg>
<svg style="left:1104.5px;top:1043px;" width="24" height="24" viewBox="0 0 24 24" fill="none"><rect x="0" y="0.3" width="23.5" height="23.7" rx="3" fill="#0f75b8"/><text x="11.6" y="20.2" font-family="Liberation Sans, sans-serif" font-weight="700" font-size="19" fill="#ffffff" stroke="#ffffff" stroke-width="0.5" text-anchor="middle" letter-spacing="-0.3">in</text></svg>
<svg style="left:1149px;top:1043px;" width="24" height="24" viewBox="0 0 24 24" fill="none"><rect x="0.3" y="4" width="23.7" height="16.6" rx="4.5" fill="#f70032"/><path d="M9.8 8.6L15.8 12.3L9.8 16z" fill="#ffffff"/></svg>
<svg style="left:1193px;top:1043px;" width="24" height="24" viewBox="0 0 24 24" fill="none"><circle cx="12" cy="12" r="11.8" fill="#ffffff"/><path d="M5.5 10.5C7 6 11 3.5 16 4" stroke="#1c3fa0" stroke-width="1.2" fill="none"/><text x="12.3" y="20.5" font-family="Liberation Sans, sans-serif" font-weight="700" font-size="18" fill="#1c3fa0" stroke="#1c3fa0" stroke-width="0.7" text-anchor="middle">i</text></svg>
<svg style="left:1237px;top:1043px;" width="24" height="24" viewBox="0 0 24 24" fill="none"><circle cx="12" cy="12" r="11.8" fill="#f5103c"/><circle cx="12" cy="12" r="7" stroke="#ffffff" stroke-width="1.2" fill="none"/><path d="M10 8.7L15.5 12L10 15.3z" fill="#ffffff"/></svg>
<svg style="left:1281px;top:1043px;" width="24" height="24" viewBox="0 0 24 24" fill="none"><circle cx="12" cy="12" r="11.8" fill="#ffffff"/><path d="M8 6.3L12 3.8L16 6.3" stroke="#a435f0" stroke-width="2.4" fill="none"/><text x="12" y="19.5" font-family="Liberation Sans, sans-serif" font-weight="700" font-size="14.5" fill="#111111" stroke="#111111" stroke-width="0.6" text-anchor="middle">U</text></svg>
<svg style="left:1325px;top:1043px;" width="24" height="24" viewBox="0 0 24 24" fill="none"><defs><linearGradient id="g11" x1="0" y1="0" x2="0" y2="1"><stop offset="0" stop-color="#ffdc1e"/><stop offset="1" stop-color="#f5bc12"/></linearGradient></defs><rect x="1.5" y="1.5" width="21.5" height="21.5" rx="0.8" fill="url(#g11)"/><path d="M12.5 12.5H23L12.5 23z" fill="#4a4a4a"/></svg>
<svg style="left:1369px;top:1043px;" width="24" height="24" viewBox="0 0 24 24" fill="none"><rect x="0.5" y="3.5" width="23.5" height="17.5" rx="1.2" fill="#3f3f3f"/><rect x="0.5" y="3.5" width="23.5" height="3" fill="#6a6a6a"/><rect x="0.5" y="3.5" width="15" height="3" fill="#bdbdbd"/><path d="M4 10L8 13.3L4 16.6" stroke="#e8e8e8" stroke-width="2.2" fill="none"/><path d="M11.5 17.2H18" stroke="#e8e8e8" stroke-width="2"/></svg>
<svg style="left:1413px;top:1043px;" width="24" height="24" viewBox="0 0 24 24" fill="none"><path d="M12.3 1.5A10.5 10.5 0 0 0 3.3 17.5L1.5 23L7.2 21.3A10.5 10.5 0 1 0 12.3 1.5z" stroke="#25d366" stroke-width="2.2" fill="#1c1c1c" stroke-linejoin="round"/><path d="M8.5 6.8C8 6.8 7.2 7.6 7.2 9C7.2 11.5 10 15.5 14 16.8C15.5 17.3 17 16.5 17.3 15.3L15 13.8L13.8 14.7C12.3 14.2 10.5 12.3 10.2 10.9L11.1 9.8L10 7z" fill="#25d366"/></svg>
<svg style="left:1457px;top:1043px;" width="24" height="24" viewBox="0 0 24 24" fill="none"><defs><linearGradient id="g12" x1="0" y1="0" x2="0" y2="1"><stop offset="0" stop-color="#0e1d52"/><stop offset="0.5" stop-color="#14407f"/><stop offset="1" stop-color="#1a86c8"/></linearGradient></defs><circle cx="12" cy="12" r="11.3" fill="url(#g12)"/><circle cx="16.3" cy="8.8" r="3.7" stroke="#ffffff" stroke-width="1.6" fill="none"/><circle cx="16.3" cy="8.8" r="1.5" fill="#ffffff"/><path d="M0.5 12.5L7 15.2A3.2 3.2 0 0 1 9.5 14.5L13 10L15.5 12.5L11.5 16.3A3.2 3.2 0 0 1 5.3 17.5L1 15.7z" fill="#ffffff"/></svg>
<svg style="left:1501px;top:1043px;" width="24" height="24" viewBox="0 0 24 24" fill="none"><defs><linearGradient id="g13" x1="0.3" y1="0" x2="0.1" y2="1"><stop offset="0" stop-color="#1fa8f5"/><stop offset="0.5" stop-color="#4cc46e"/><stop offset="1" stop-color="#f7d62a"/></linearGradient><linearGradient id="g14" x1="0.6" y1="0" x2="0.3" y2="1"><stop offset="0" stop-color="#a659f0"/><stop offset="0.5" stop-color="#f2609c"/><stop offset="1" stop-color="#ffa544"/></linearGradient></defs><path d="M12 2H15.5Q17.6 2 18 4.3L18.5 7.5H13z" fill="#2462e6"/><path d="M6.5 17H11.5L10.5 20.5Q10 22.3 8.5 22.3Q7 22.3 6.8 20.5z" fill="#f2552c"/><path d="M6.2 1.8H13.5Q14.5 1.8 14.2 3L11.3 14.5Q10.7 16.6 8.6 16.6H3Q0.3 16.6 1 13.8L3.6 4Q4.2 1.8 6.2 1.8z" fill="url(#g13)"/><path d="M15 7.2H21Q23.8 7.2 23 10L20.4 20Q19.8 22.3 17.6 22.3H10.5Q9.5 22.3 9.8 21.2L12.8 9.3Q13.3 7.2 15 7.2z" fill="url(#g14)"/></svg>
<svg style="left:1545px;top:1043px;" width="24" height="24" viewBox="0 0 24 24" fill="none"><defs><linearGradient id="g15" x1="0" y1="0" x2="0" y2="1"><stop offset="0" stop-color="#efb4ff"/><stop offset="1" stop-color="#a86cf8"/></linearGradient></defs><path d="M17.5 1L23.8 3.7V20.3L17.5 23L8 14.7L3.5 18.3L0.5 16.8V7.2L3.5 5.7L8 9.3z" fill="#8a48e0"/><path d="M17.5 1L23.8 3.7V20.3L17.5 23z" fill="url(#g15)"/><path d="M1.5 6.5L17.5 23L21 21.5L4 4.8z" fill="#d283fb"/><path d="M17.5 7.8V16.2L12.5 12z" fill="#1c1c1c"/><path d="M3.3 9.5V14.5L6 12z" fill="#1c1c1c"/></svg>
<svg style="left:1676.5px;top:1050.3px;" width="11.5" height="7" viewBox="0 0 11.5 7" fill="none"><path d="M0.8 6.2L5.75 1.2L10.7 6.2" stroke="#f0f0f0" stroke-width="1.6" stroke-linecap="round" stroke-linejoin="round"/></svg>
<svg style="left:1705.5px;top:1046.5px;" width="17" height="17" viewBox="0 0 17 17" fill="none"><circle cx="7.3" cy="7.3" r="6.5" stroke="#f0f0f0" stroke-width="1.4" fill="none"/><circle cx="5" cy="5.5" r="1" fill="#f0f0f0"/><circle cx="9.5" cy="5.5" r="1" fill="#f0f0f0"/><path d="M4 8.8A3.6 3.6 0 0 0 10.5 8.8" stroke="#f0f0f0" stroke-width="1.2" fill="none"/><circle cx="12" cy="12" r="4.3" fill="#f0f0f0" stroke="#1c1c1c" stroke-width="1"/><path d="M12 9.8V14.2M9.8 12H14.2" stroke="#1c1c1c" stroke-width="1.2"/></svg>
<svg class="x" style="left:1740.4px;top:1040px" width="26" height="16"><text y="12.44" font-size="12.8" fill="#ffffff" textLength="23.4" lengthAdjust="spacingAndGlyphs" style="stroke:#ffffff;stroke-width:0.45px">ENG</text></svg>
<svg class="x" style="left:1744.5px;top:1056.3px" width="18" height="16"><text y="12.44" font-size="12.8" fill="#ffffff" textLength="15" lengthAdjust="spacingAndGlyphs" style="stroke:#ffffff;stroke-width:0.45px">US</text></svg>
<svg style="left:1781.5px;top:1046.5px;" width="17" height="16.5" viewBox="0 0 17 16.5" fill="none"><path d="M10.5 1H1V11.5H10.5" stroke="#f0f0f0" stroke-width="1.2" fill="none"/><path d="M6 11.5V14.5M3 15H10.5" stroke="#f0f0f0" stroke-width="1.2"/><rect x="12" y="0.6" width="4" height="5.4" rx="0.8" stroke="#f0f0f0" stroke-width="1.1" fill="none"/><path d="M14 6V15.5M12.8 2.8H15.2" stroke="#f0f0f0" stroke-width="1.1"/></svg>
<svg style="left:1805.5px;top:1048px;" width="16" height="14.5" viewBox="0 0 16 14.5" fill="none"><path d="M0.7 5H3.5L7.3 1.5V13L3.5 9.5H0.7z" stroke="#f0f0f0" stroke-width="1.2" fill="none" stroke-linejoin="round"/><path d="M9.3 5A3.5 3.5 0 0 1 9.3 9.5" stroke="#f0f0f0" stroke-width="1.1" fill="none"/><path d="M11.3 3A6 6 0 0 1 11.3 11.5" stroke="#f0f0f0" stroke-width="1.1" fill="none"/><path d="M13.5 1A9 9 0 0 1 13.5 13.5" stroke="#6a6a6a" stroke-width="1.1" fill="none"/></svg>
<svg class="x" style="left:1872px;top:1039.3px" width="33" height="16"><text y="12.44" font-size="12.8" fill="#ffffff" textLength="29.6" lengthAdjust="spacingAndGlyphs" style="stroke:#ffffff;stroke-width:0.45px">18:52</text></svg>
<svg class="x" style="left:1838.6px;top:1055.3px" width="66" height="16"><text y="12.44" font-size="12.8" fill="#ffffff" textLength="63" lengthAdjust="spacingAndGlyphs" style="stroke:#ffffff;stroke-width:0.45px">2026/01/18</text></svg>
<div class="b" style="left:297px;top:41px;width:1.2px;height:964px;background:#2b2b2b;"></div>
<div class="b" style="left:56.9px;top:41px;width:1.2px;height:964px;background:#2b2b2b;"></div>
</div>
</body>
</html>
